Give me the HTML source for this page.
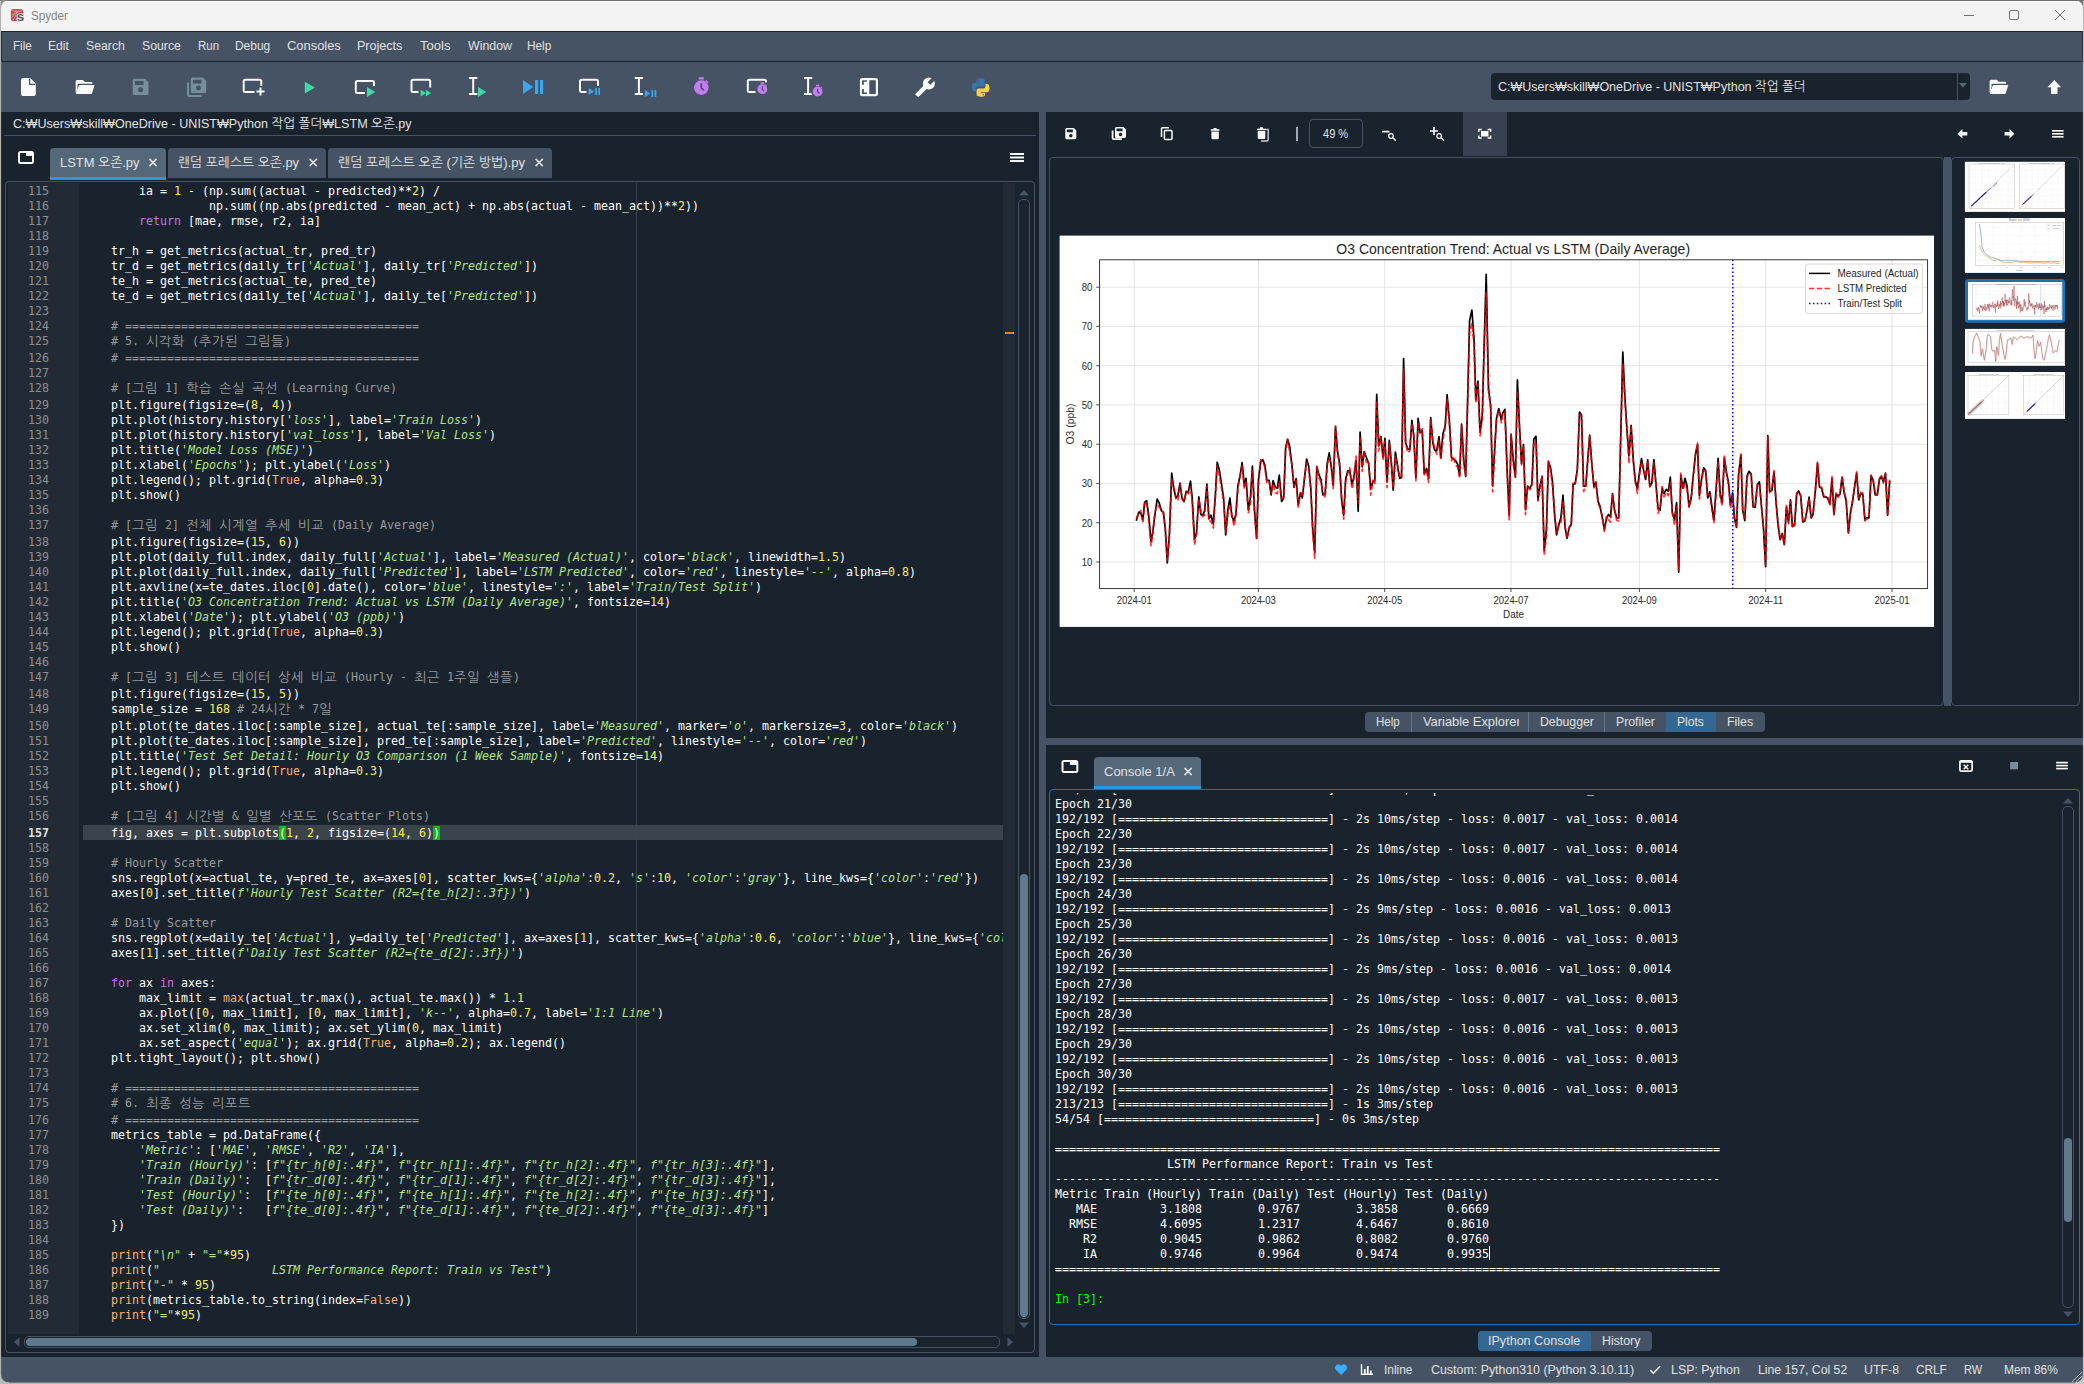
<!DOCTYPE html>
<html lang="ko"><head><meta charset="utf-8"><title>Spyder</title>
<style>
*{box-sizing:border-box;margin:0;padding:0}
html,body{width:2084px;height:1384px;overflow:hidden;background:#aeb0b3}
body{position:relative;font-family:"Liberation Sans","NanumGothic","Noto Sans CJK KR",sans-serif;font-size:13px;color:#e0e1e3}
.a{position:absolute}
.t{position:absolute;white-space:pre;line-height:1}
#top0{left:0;top:0;width:2084px;height:1px;background:#6d6d6d}
#win{left:0;top:0;width:2084px;height:1384px;background:#19232d;overflow:hidden}
#title{left:0;top:0;width:2084px;height:31px;background:#f3f3f3}
#menub{left:1px;top:31px;width:2082px;height:31px;background:#455364;border:1px solid #19232d}
#toolb{left:1px;top:62px;width:2082px;height:50px;background:#455364}
.m{position:absolute;top:38px;font-size:13px;line-height:15px;color:#e0e1e3;white-space:pre}
.ui{font-size:13px;color:#e0e1e3}
.mono{font-family:"DejaVu Sans Mono","Liberation Mono","NanumGothic",monospace;font-size:11.63px}
.ln,.cl{position:absolute;white-space:pre;height:15px;line-height:15px;font-family:"DejaVu Sans Mono","Liberation Mono","NanumGothic",monospace;font-size:11.63px;letter-spacing:0}
.ln{left:8px;width:41px;margin-top:0.2px;text-align:right;color:#8c8f92}
.cl{left:82px;color:#fff;margin-top:0.2px}
.cl i,.cl b{font-style:normal;font-weight:normal}
.cl .c{color:#999}
.cl .s{color:#b0e686;font-style:italic}
.cl .n{color:#faed5c}
.cl .kw{color:#c670e0}
.cl .bi{color:#fab16c}
.cl .mp{background:#0bbe0b}
.cl .k{font-family:"NanumGothic","Noto Sans CJK KR",sans-serif;font-size:13.3px;letter-spacing:0.5px;font-style:normal;display:inline-block;line-height:15px;vertical-align:top}
.co{position:absolute;left:1054px;margin-top:0.8px;white-space:pre;height:15px;line-height:15px;color:#fff;font-family:"DejaVu Sans Mono","Liberation Mono",monospace;font-size:11.63px}
svg{position:absolute;overflow:visible}
</style></head>
<body>
<div class="a" id="win">
<div class="a" id="title"></div>
<div class="t" style="left:30.9px;top:8px;font-size:13px;color:#868686;line-height:16px;transform-origin:0 0;transform:scaleX(0.8956);">Spyder</div>
<svg style="left:1950px;top:0" width="130" height="30" viewBox="1950 0 130 30"><g fill="none" stroke="#707070" stroke-width="1"><path d="M1964 15.5h10"/><rect x="2009.5" y="10.5" width="9" height="9" rx="1.5"/><path d="M2055 10l10 10M2065 10l-10 10"/></g></svg>
<div class="a" id="menub"></div>
<div class="t" style="left:12.7px;top:38px;font-size:13.4px;line-height:16px;color:#e0e1e3;transform-origin:0 0;transform:scaleX(0.8666);">File</div>
<div class="t" style="left:48.2px;top:38px;font-size:13.4px;line-height:16px;color:#e0e1e3;transform-origin:0 0;transform:scaleX(0.9056);">Edit</div>
<div class="t" style="left:85.6px;top:38px;font-size:13.4px;line-height:16px;color:#e0e1e3;transform-origin:0 0;transform:scaleX(0.9166);">Search</div>
<div class="t" style="left:141.5px;top:38px;font-size:13.4px;line-height:16px;color:#e0e1e3;transform-origin:0 0;transform:scaleX(0.9166);">Source</div>
<div class="t" style="left:197.5px;top:38px;font-size:13.4px;line-height:16px;color:#e0e1e3;transform-origin:0 0;transform:scaleX(0.8544);">Run</div>
<div class="t" style="left:235.4px;top:38px;font-size:13.4px;line-height:16px;color:#e0e1e3;transform-origin:0 0;transform:scaleX(0.8918);">Debug</div>
<div class="t" style="left:287.2px;top:38px;font-size:13.4px;line-height:16px;color:#e0e1e3;transform-origin:0 0;transform:scaleX(0.9637);">Consoles</div>
<div class="t" style="left:357.2px;top:38px;font-size:13.4px;line-height:16px;color:#e0e1e3;transform-origin:0 0;transform:scaleX(0.9364);">Projects</div>
<div class="t" style="left:420px;top:38px;font-size:13.4px;line-height:16px;color:#e0e1e3;transform-origin:0 0;transform:scaleX(0.9755);">Tools</div>
<div class="t" style="left:467.5px;top:38px;font-size:13.4px;line-height:16px;color:#e0e1e3;transform-origin:0 0;transform:scaleX(0.9236);">Window</div>
<div class="t" style="left:527.2px;top:38px;font-size:13.4px;line-height:16px;color:#e0e1e3;transform-origin:0 0;transform:scaleX(0.8821);">Help</div>
<div class="a" id="toolb"></div>
<div class="a" style="left:1491px;top:73px;width:479px;height:27px;background:#19232d;border-radius:4px"></div>
<div class="a" style="left:1957px;top:73px;width:1px;height:27px;background:#455364"></div>
<div class="t" style="left:1498px;top:78.5px;font-size:13.4px;line-height:16px;color:#e0e1e3;transform-origin:0 0;transform:scaleX(0.9337);">C:₩Users₩skill₩OneDrive - UNIST₩Python 작업 폴더</div>
<svg style="left:1959px;top:83px" width="8" height="5" viewBox="0 0 8 5"><path d="M0 0h8l-4 4.5z" fill="#54687a"/></svg>
<div class="a" style="left:1px;top:1357px;width:2082px;height:27px;background:#455364"></div>
<div class="t" style="left:1383.6px;top:1361.5px;font-size:13.4px;line-height:16px;color:#e0e1e3;transform-origin:0 0;transform:scaleX(0.8902);">Inline</div>
<div class="t" style="left:1430.5px;top:1361.5px;font-size:13.4px;line-height:16px;color:#e0e1e3;transform-origin:0 0;transform:scaleX(0.9264);">Custom: Python310 (Python 3.10.11)</div>
<div class="t" style="left:1671.3px;top:1361.5px;font-size:13.4px;line-height:16px;color:#e0e1e3;transform-origin:0 0;transform:scaleX(0.9254);">LSP: Python</div>
<div class="t" style="left:1758.2px;top:1361.5px;font-size:13.4px;line-height:16px;color:#e0e1e3;transform-origin:0 0;transform:scaleX(0.9146);">Line 157, Col 52</div>
<div class="t" style="left:1864.3px;top:1361.5px;font-size:13.4px;line-height:16px;color:#e0e1e3;transform-origin:0 0;transform:scaleX(0.9226);">UTF-8</div>
<div class="t" style="left:1916.3px;top:1361.5px;font-size:13.4px;line-height:16px;color:#e0e1e3;transform-origin:0 0;transform:scaleX(0.8808);">CRLF</div>
<div class="t" style="left:1964px;top:1361.5px;font-size:13.4px;line-height:16px;color:#e0e1e3;transform-origin:0 0;transform:scaleX(0.8153);">RW</div>
<div class="t" style="left:2003.5px;top:1361.5px;font-size:13.4px;line-height:16px;color:#e0e1e3;transform-origin:0 0;transform:scaleX(0.8925);">Mem 86%</div>
<div class="a" style="left:1039px;top:112px;width:7px;height:1245px;background:#455364"></div>
<div class="t" style="left:13px;top:115.5px;font-size:13.4px;line-height:16px;color:#e0e1e3;transform-origin:0 0;transform:scaleX(0.9389);">C:₩Users₩skill₩OneDrive - UNIST₩Python 작업 폴더₩LSTM 오존.py</div>
<div class="a" style="left:4px;top:135px;width:1032px;height:1px;background:#455364"></div>
<div class="a" style="left:50px;top:148px;width:116px;height:32px;background:#54687a;border-radius:4px 4px 0 0;border-bottom:3px solid #259ae9"></div>
<div class="a" style="left:168px;top:148px;width:158px;height:30px;background:#455364;border-radius:4px 4px 0 0"></div>
<div class="a" style="left:328px;top:148px;width:224px;height:30px;background:#455364;border-radius:4px 4px 0 0"></div>
<div class="t" style="left:60px;top:154.5px;font-size:13.4px;line-height:16px;color:#e0e1e3;transform-origin:0 0;transform:scaleX(0.9638);">LSTM 오존.py</div>
<div class="t" style="left:178px;top:154.5px;font-size:13.4px;line-height:16px;color:#e0e1e3;transform-origin:0 0;transform:scaleX(0.9602);">랜덤 포레스트 오존.py</div>
<div class="t" style="left:338px;top:154.5px;font-size:13.4px;line-height:16px;color:#e0e1e3;transform-origin:0 0;transform:scaleX(0.9703);">랜덤 포레스트 오존 (기존 방법).py</div>
<div class="a" style="left:5px;top:181px;width:1030px;height:1172px;border:1px solid #455364;border-radius:4px"></div>
<div class="a" style="left:8px;top:183px;width:71px;height:1151px;background:#222b35"></div>
<div class="a" style="left:1003px;top:183px;width:12px;height:1151px;background:#222b35"></div>
<div class="a" style="left:83px;top:825.3px;width:920px;height:14.7px;background:#3a424a"></div>
<div class="a" style="left:636px;top:183px;width:1px;height:1151px;background:#3a4552"></div>
<div class="a" style="left:1005px;top:332px;width:9px;height:2px;background:#e8841a"></div>
<div class="a" style="left:79px;top:183px;width:924px;height:1151px;overflow:hidden">
<div class="cl" style="left:4px;top:1px">        ia = <i class="n">1</i> - (np.sum((actual - predicted)**<i class="n">2</i>) /</div>
<div class="cl" style="left:4px;top:16px">                  np.sum((np.abs(predicted - mean_act) + np.abs(actual - mean_act))**<i class="n">2</i>))</div>
<div class="cl" style="left:4px;top:31px">        <i class="kw">return</i> [mae, rmse, r2, ia]</div>
<div class="cl" style="left:4px;top:61px">    tr_h = get_metrics(actual_tr, pred_tr)</div>
<div class="cl" style="left:4px;top:76px">    tr_d = get_metrics(daily_tr[<i class="s">'Actual'</i>], daily_tr[<i class="s">'Predicted'</i>])</div>
<div class="cl" style="left:4px;top:91px">    te_h = get_metrics(actual_te, pred_te)</div>
<div class="cl" style="left:4px;top:106px">    te_d = get_metrics(daily_te[<i class="s">'Actual'</i>], daily_te[<i class="s">'Predicted'</i>])</div>
<div class="cl" style="left:4px;top:136px">    <i class="c"># ==========================================</i></div>
<div class="cl" style="left:4px;top:151px">    <i class="c"># 5. <b class="k">시각화</b> (<b class="k">추가된</b> <b class="k">그림들</b>)</i></div>
<div class="cl" style="left:4px;top:168px">    <i class="c"># ==========================================</i></div>
<div class="cl" style="left:4px;top:198px">    <i class="c"># [<b class="k">그림</b> 1] <b class="k">학습</b> <b class="k">손실</b> <b class="k">곡선</b> (Learning Curve)</i></div>
<div class="cl" style="left:4px;top:215px">    plt.figure(figsize=(<i class="n">8</i>, <i class="n">4</i>))</div>
<div class="cl" style="left:4px;top:230px">    plt.plot(history.history[<i class="s">'loss'</i>], label=<i class="s">'Train Loss'</i>)</div>
<div class="cl" style="left:4px;top:245px">    plt.plot(history.history[<i class="s">'val_loss'</i>], label=<i class="s">'Val Loss'</i>)</div>
<div class="cl" style="left:4px;top:260px">    plt.title(<i class="s">'Model Loss (MSE)'</i>)</div>
<div class="cl" style="left:4px;top:275px">    plt.xlabel(<i class="s">'Epochs'</i>); plt.ylabel(<i class="s">'Loss'</i>)</div>
<div class="cl" style="left:4px;top:290px">    plt.legend(); plt.grid(<i class="bi">True</i>, alpha=<i class="n">0.3</i>)</div>
<div class="cl" style="left:4px;top:305px">    plt.show()</div>
<div class="cl" style="left:4px;top:335px">    <i class="c"># [<b class="k">그림</b> 2] <b class="k">전체</b> <b class="k">시계열</b> <b class="k">추세</b> <b class="k">비교</b> (Daily Average)</i></div>
<div class="cl" style="left:4px;top:352px">    plt.figure(figsize=(<i class="n">15</i>, <i class="n">6</i>))</div>
<div class="cl" style="left:4px;top:367px">    plt.plot(daily_full.index, daily_full[<i class="s">'Actual'</i>], label=<i class="s">'Measured (Actual)'</i>, color=<i class="s">'black'</i>, linewidth=<i class="n">1.5</i>)</div>
<div class="cl" style="left:4px;top:382px">    plt.plot(daily_full.index, daily_full[<i class="s">'Predicted'</i>], label=<i class="s">'LSTM Predicted'</i>, color=<i class="s">'red'</i>, linestyle=<i class="s">'--'</i>, alpha=<i class="n">0.8</i>)</div>
<div class="cl" style="left:4px;top:397px">    plt.axvline(x=te_dates.iloc[<i class="n">0</i>].date(), color=<i class="s">'blue'</i>, linestyle=<i class="s">':'</i>, label=<i class="s">'Train/Test Split'</i>)</div>
<div class="cl" style="left:4px;top:412px">    plt.title(<i class="s">'O3 Concentration Trend: Actual vs LSTM (Daily Average)'</i>, fontsize=<i class="n">14</i>)</div>
<div class="cl" style="left:4px;top:427px">    plt.xlabel(<i class="s">'Date'</i>); plt.ylabel(<i class="s">'O3 (ppb)'</i>)</div>
<div class="cl" style="left:4px;top:442px">    plt.legend(); plt.grid(<i class="bi">True</i>, alpha=<i class="n">0.3</i>)</div>
<div class="cl" style="left:4px;top:457px">    plt.show()</div>
<div class="cl" style="left:4px;top:487px">    <i class="c"># [<b class="k">그림</b> 3] <b class="k">테스트</b> <b class="k">데이터</b> <b class="k">상세</b> <b class="k">비교</b> (Hourly - <b class="k">최근</b> 1<b class="k">주일</b> <b class="k">샘플</b>)</i></div>
<div class="cl" style="left:4px;top:504px">    plt.figure(figsize=(<i class="n">15</i>, <i class="n">5</i>))</div>
<div class="cl" style="left:4px;top:519px">    sample_size = <i class="n">168</i> <i class="c"># 24<b class="k">시간</b> * 7<b class="k">일</b></i></div>
<div class="cl" style="left:4px;top:536px">    plt.plot(te_dates.iloc[:sample_size], actual_te[:sample_size], label=<i class="s">'Measured'</i>, marker=<i class="s">'o'</i>, markersize=<i class="n">3</i>, color=<i class="s">'black'</i>)</div>
<div class="cl" style="left:4px;top:551px">    plt.plot(te_dates.iloc[:sample_size], pred_te[:sample_size], label=<i class="s">'Predicted'</i>, linestyle=<i class="s">'--'</i>, color=<i class="s">'red'</i>)</div>
<div class="cl" style="left:4px;top:566px">    plt.title(<i class="s">'Test Set Detail: Hourly O3 Comparison (1 Week Sample)'</i>, fontsize=<i class="n">14</i>)</div>
<div class="cl" style="left:4px;top:581px">    plt.legend(); plt.grid(<i class="bi">True</i>, alpha=<i class="n">0.3</i>)</div>
<div class="cl" style="left:4px;top:596px">    plt.show()</div>
<div class="cl" style="left:4px;top:626px">    <i class="c"># [<b class="k">그림</b> 4] <b class="k">시간별</b> &amp; <b class="k">일별</b> <b class="k">산포도</b> (Scatter Plots)</i></div>
<div class="cl" style="left:4px;top:643px">    fig, axes = plt.subplots<i class="mp">(</i><i class="n">1</i>, <i class="n">2</i>, figsize=(<i class="n">14</i>, <i class="n">6</i>)<i class="mp">)</i></div>
<div class="cl" style="left:4px;top:673px">    <i class="c"># Hourly Scatter</i></div>
<div class="cl" style="left:4px;top:688px">    sns.regplot(x=actual_te, y=pred_te, ax=axes[<i class="n">0</i>], scatter_kws={<i class="s">'alpha'</i>:<i class="n">0.2</i>, <i class="s">'s'</i>:<i class="n">10</i>, <i class="s">'color'</i>:<i class="s">'gray'</i>}, line_kws={<i class="s">'color'</i>:<i class="s">'red'</i>})</div>
<div class="cl" style="left:4px;top:703px">    axes[<i class="n">0</i>].set_title(<i class="s">f'Hourly Test Scatter (R2={te_h[2]:.3f})'</i>)</div>
<div class="cl" style="left:4px;top:733px">    <i class="c"># Daily Scatter</i></div>
<div class="cl" style="left:4px;top:748px">    sns.regplot(x=daily_te[<i class="s">'Actual'</i>], y=daily_te[<i class="s">'Predicted'</i>], ax=axes[<i class="n">1</i>], scatter_kws={<i class="s">'alpha'</i>:<i class="n">0.6</i>, <i class="s">'color'</i>:<i class="s">'blue'</i>}, line_kws={<i class="s">'color'</i>:<i class="s">'red'</i>})</div>
<div class="cl" style="left:4px;top:763px">    axes[<i class="n">1</i>].set_title(<i class="s">f'Daily Test Scatter (R2={te_d[2]:.3f})'</i>)</div>
<div class="cl" style="left:4px;top:793px">    <i class="kw">for</i> ax <i class="kw">in</i> axes:</div>
<div class="cl" style="left:4px;top:808px">        max_limit = <i class="bi">max</i>(actual_tr.max(), actual_te.max()) * <i class="n">1.1</i></div>
<div class="cl" style="left:4px;top:823px">        ax.plot([<i class="n">0</i>, max_limit], [<i class="n">0</i>, max_limit], <i class="s">'k--'</i>, alpha=<i class="n">0.7</i>, label=<i class="s">'1:1 Line'</i>)</div>
<div class="cl" style="left:4px;top:838px">        ax.set_xlim(<i class="n">0</i>, max_limit); ax.set_ylim(<i class="n">0</i>, max_limit)</div>
<div class="cl" style="left:4px;top:853px">        ax.set_aspect(<i class="s">'equal'</i>); ax.grid(<i class="bi">True</i>, alpha=<i class="n">0.2</i>); ax.legend()</div>
<div class="cl" style="left:4px;top:868px">    plt.tight_layout(); plt.show()</div>
<div class="cl" style="left:4px;top:898px">    <i class="c"># ==========================================</i></div>
<div class="cl" style="left:4px;top:913px">    <i class="c"># 6. <b class="k">최종</b> <b class="k">성능</b> <b class="k">리포트</b></i></div>
<div class="cl" style="left:4px;top:930px">    <i class="c"># ==========================================</i></div>
<div class="cl" style="left:4px;top:945px">    metrics_table = pd.DataFrame({</div>
<div class="cl" style="left:4px;top:960px">        <i class="s">'Metric'</i>: [<i class="s">'MAE'</i>, <i class="s">'RMSE'</i>, <i class="s">'R2'</i>, <i class="s">'IA'</i>],</div>
<div class="cl" style="left:4px;top:975px">        <i class="s">'Train (Hourly)'</i>: [<i class="s">f"{tr_h[0]:.4f}"</i>, <i class="s">f"{tr_h[1]:.4f}"</i>, <i class="s">f"{tr_h[2]:.4f}"</i>, <i class="s">f"{tr_h[3]:.4f}"</i>],</div>
<div class="cl" style="left:4px;top:990px">        <i class="s">'Train (Daily)'</i>:  [<i class="s">f"{tr_d[0]:.4f}"</i>, <i class="s">f"{tr_d[1]:.4f}"</i>, <i class="s">f"{tr_d[2]:.4f}"</i>, <i class="s">f"{tr_d[3]:.4f}"</i>],</div>
<div class="cl" style="left:4px;top:1005px">        <i class="s">'Test (Hourly)'</i>:  [<i class="s">f"{te_h[0]:.4f}"</i>, <i class="s">f"{te_h[1]:.4f}"</i>, <i class="s">f"{te_h[2]:.4f}"</i>, <i class="s">f"{te_h[3]:.4f}"</i>],</div>
<div class="cl" style="left:4px;top:1020px">        <i class="s">'Test (Daily)'</i>:   [<i class="s">f"{te_d[0]:.4f}"</i>, <i class="s">f"{te_d[1]:.4f}"</i>, <i class="s">f"{te_d[2]:.4f}"</i>, <i class="s">f"{te_d[3]:.4f}"</i>]</div>
<div class="cl" style="left:4px;top:1035px">    })</div>
<div class="cl" style="left:4px;top:1065px">    <i class="bi">print</i>(<i class="s">"\n"</i> + <i class="s">"="</i>*<i class="n">95</i>)</div>
<div class="cl" style="left:4px;top:1080px">    <i class="bi">print</i>(<i class="s">"                LSTM Performance Report: Train vs Test"</i>)</div>
<div class="cl" style="left:4px;top:1095px">    <i class="bi">print</i>(<i class="s">"-"</i> * <i class="n">95</i>)</div>
<div class="cl" style="left:4px;top:1110px">    <i class="bi">print</i>(metrics_table.to_string(index=<i class="bi">False</i>))</div>
<div class="cl" style="left:4px;top:1125px">    <i class="bi">print</i>(<i class="s">"="</i>*<i class="n">95</i>)</div>
</div>
<div class="ln" style="top:184px">115</div>
<div class="ln" style="top:199px">116</div>
<div class="ln" style="top:214px">117</div>
<div class="ln" style="top:229px">118</div>
<div class="ln" style="top:244px">119</div>
<div class="ln" style="top:259px">120</div>
<div class="ln" style="top:274px">121</div>
<div class="ln" style="top:289px">122</div>
<div class="ln" style="top:304px">123</div>
<div class="ln" style="top:319px">124</div>
<div class="ln" style="top:334px">125</div>
<div class="ln" style="top:351px">126</div>
<div class="ln" style="top:366px">127</div>
<div class="ln" style="top:381px">128</div>
<div class="ln" style="top:398px">129</div>
<div class="ln" style="top:413px">130</div>
<div class="ln" style="top:428px">131</div>
<div class="ln" style="top:443px">132</div>
<div class="ln" style="top:458px">133</div>
<div class="ln" style="top:473px">134</div>
<div class="ln" style="top:488px">135</div>
<div class="ln" style="top:503px">136</div>
<div class="ln" style="top:518px">137</div>
<div class="ln" style="top:535px">138</div>
<div class="ln" style="top:550px">139</div>
<div class="ln" style="top:565px">140</div>
<div class="ln" style="top:580px">141</div>
<div class="ln" style="top:595px">142</div>
<div class="ln" style="top:610px">143</div>
<div class="ln" style="top:625px">144</div>
<div class="ln" style="top:640px">145</div>
<div class="ln" style="top:655px">146</div>
<div class="ln" style="top:670px">147</div>
<div class="ln" style="top:687px">148</div>
<div class="ln" style="top:702px">149</div>
<div class="ln" style="top:719px">150</div>
<div class="ln" style="top:734px">151</div>
<div class="ln" style="top:749px">152</div>
<div class="ln" style="top:764px">153</div>
<div class="ln" style="top:779px">154</div>
<div class="ln" style="top:794px">155</div>
<div class="ln" style="top:809px">156</div>
<div class="ln" style="top:826px;color:#e0e1e3;font-weight:bold">157</div>
<div class="ln" style="top:841px">158</div>
<div class="ln" style="top:856px">159</div>
<div class="ln" style="top:871px">160</div>
<div class="ln" style="top:886px">161</div>
<div class="ln" style="top:901px">162</div>
<div class="ln" style="top:916px">163</div>
<div class="ln" style="top:931px">164</div>
<div class="ln" style="top:946px">165</div>
<div class="ln" style="top:961px">166</div>
<div class="ln" style="top:976px">167</div>
<div class="ln" style="top:991px">168</div>
<div class="ln" style="top:1006px">169</div>
<div class="ln" style="top:1021px">170</div>
<div class="ln" style="top:1036px">171</div>
<div class="ln" style="top:1051px">172</div>
<div class="ln" style="top:1066px">173</div>
<div class="ln" style="top:1081px">174</div>
<div class="ln" style="top:1096px">175</div>
<div class="ln" style="top:1113px">176</div>
<div class="ln" style="top:1128px">177</div>
<div class="ln" style="top:1143px">178</div>
<div class="ln" style="top:1158px">179</div>
<div class="ln" style="top:1173px">180</div>
<div class="ln" style="top:1188px">181</div>
<div class="ln" style="top:1203px">182</div>
<div class="ln" style="top:1218px">183</div>
<div class="ln" style="top:1233px">184</div>
<div class="ln" style="top:1248px">185</div>
<div class="ln" style="top:1263px">186</div>
<div class="ln" style="top:1278px">187</div>
<div class="ln" style="top:1293px">188</div>
<div class="ln" style="top:1308px">189</div>
<svg style="left:1019px;top:189.5px" width="10" height="6" viewBox="0 0 10 6"><path d="M0 5.5L5 0l5 5.5z" fill="#455364"/></svg>
<div class="a" style="left:1018px;top:198.5px;width:12px;height:1120px;border:1px solid #455364;border-radius:5px"></div>
<div class="a" style="left:1019.6px;top:874px;width:8.8px;height:443px;background:#60798b;border-radius:4.4px"></div>
<svg style="left:1019px;top:1321.5px" width="10" height="6" viewBox="0 0 10 6"><path d="M0 0.5L5 6l5-5.5z" fill="#455364"/></svg>
<svg style="left:14.3px;top:1337px" width="6" height="10" viewBox="0 0 6 10"><path d="M5.5 0L0 5l5.5 5z" fill="#455364"/></svg>
<div class="a" style="left:24px;top:1336px;width:976px;height:12px;border:1px solid #455364;border-radius:5px"></div>
<div class="a" style="left:26px;top:1338px;width:891px;height:8px;background:#60798b;border-radius:4px"></div>
<svg style="left:1006.5px;top:1337.3px" width="6" height="10" viewBox="0 0 6 10"><path d="M0.5 0L6 5l-5.5 5z" fill="#455364"/></svg>
<div class="a" style="left:1463px;top:112px;width:44px;height:44px;background:#37414f"></div>
<div class="a" style="left:1309px;top:119px;width:54px;height:29px;border:1px solid #455364;border-radius:4px"></div>
<div class="t" style="left:1322.7px;top:125.5px;font-size:13.4px;line-height:16px;color:#e0e1e3;transform-origin:0 0;transform:scaleX(0.8254);">49 %</div>
<div class="a" style="left:1296px;top:127px;width:2px;height:14px;background:#9da9b5"></div>
<div class="a" style="left:1049px;top:156.5px;width:895px;height:549.5px;border:1px solid #455364;border-radius:4px"></div>
<div class="a" style="left:1944px;top:156.5px;width:7px;height:549.5px;background:#455364"></div>
<div class="a" style="left:1951px;top:156.5px;width:129px;height:549.5px;border:1px solid #455364;border-radius:4px"></div>
<div class="a" style="left:1365px;top:712px;width:400px;height:20px;background:#455364;border-radius:4px"></div>
<div class="a" style="left:1666px;top:712px;width:50px;height:20px;background:#346792"></div>
<div class="a" style="left:1411px;top:712px;width:1px;height:20px;background:#60798b"></div>
<div class="a" style="left:1528px;top:712px;width:1px;height:20px;background:#60798b"></div>
<div class="a" style="left:1604px;top:712px;width:1px;height:20px;background:#60798b"></div>
<div class="t" style="left:1376.4px;top:713.5px;font-size:13.4px;line-height:16px;color:#e0e1e3;transform-origin:0 0;transform:scaleX(0.8567);">Help</div>
<div class="a" style="left:1420px;top:712px;width:98.6px;height:20px;overflow:hidden"><div class="t" style="left:2.7999999999999545px;top:1.5px;font-size:13.4px;line-height:16px;color:#e0e1e3;transform-origin:0 0;transform:scaleX(0.9605);">Variable Explorer</div></div>
<div class="t" style="left:1540.4px;top:713.5px;font-size:13.4px;line-height:16px;color:#e0e1e3;transform-origin:0 0;transform:scaleX(0.9162);">Debugger</div>
<div class="t" style="left:1616.4px;top:713.5px;font-size:13.4px;line-height:16px;color:#e0e1e3;transform-origin:0 0;transform:scaleX(0.9146);">Profiler</div>
<div class="t" style="left:1677.3px;top:713.5px;font-size:13.4px;line-height:16px;color:#e0e1e3;transform-origin:0 0;transform:scaleX(0.9033);">Plots</div>
<div class="t" style="left:1727.4px;top:713.5px;font-size:13.4px;line-height:16px;color:#e0e1e3;transform-origin:0 0;transform:scaleX(0.9229);">Files</div>
<div class="a" style="left:1046px;top:738px;width:1037px;height:7px;background:#455364"></div>
<div class="a" style="left:1094px;top:757px;width:107px;height:32px;background:#54687a;border-radius:4px 4px 0 0;border-bottom:3px solid #259ae9"></div>
<div class="t" style="left:1104.2px;top:763.5px;font-size:13.4px;line-height:16px;color:#e0e1e3;transform-origin:0 0;transform:scaleX(0.9705);">Console 1/A</div>
<div class="a" style="left:1049px;top:789px;width:1031px;height:536px;border:1px solid #1a72bb;border-radius:4px"></div>
<div class="a" style="left:1050px;top:792.5px;width:1010px;height:531px;overflow:hidden">
<div class="co" style="left:5px;top:-11.5px">192/192 [==============================] - 2s 10ms/step - loss: 0.0017 - val_loss: 0.0014</div>
<div class="co" style="left:5px;top:3.5px">Epoch 21/30</div>
<div class="co" style="left:5px;top:18.5px">192/192 [==============================] - 2s 10ms/step - loss: 0.0017 - val_loss: 0.0014</div>
<div class="co" style="left:5px;top:33.5px">Epoch 22/30</div>
<div class="co" style="left:5px;top:48.5px">192/192 [==============================] - 2s 10ms/step - loss: 0.0017 - val_loss: 0.0014</div>
<div class="co" style="left:5px;top:63.5px">Epoch 23/30</div>
<div class="co" style="left:5px;top:78.5px">192/192 [==============================] - 2s 10ms/step - loss: 0.0016 - val_loss: 0.0014</div>
<div class="co" style="left:5px;top:93.5px">Epoch 24/30</div>
<div class="co" style="left:5px;top:108.5px">192/192 [==============================] - 2s 9ms/step - loss: 0.0016 - val_loss: 0.0013</div>
<div class="co" style="left:5px;top:123.5px">Epoch 25/30</div>
<div class="co" style="left:5px;top:138.5px">192/192 [==============================] - 2s 10ms/step - loss: 0.0016 - val_loss: 0.0013</div>
<div class="co" style="left:5px;top:153.5px">Epoch 26/30</div>
<div class="co" style="left:5px;top:168.5px">192/192 [==============================] - 2s 9ms/step - loss: 0.0016 - val_loss: 0.0014</div>
<div class="co" style="left:5px;top:183.5px">Epoch 27/30</div>
<div class="co" style="left:5px;top:198.5px">192/192 [==============================] - 2s 10ms/step - loss: 0.0017 - val_loss: 0.0013</div>
<div class="co" style="left:5px;top:213.5px">Epoch 28/30</div>
<div class="co" style="left:5px;top:228.5px">192/192 [==============================] - 2s 10ms/step - loss: 0.0016 - val_loss: 0.0013</div>
<div class="co" style="left:5px;top:243.5px">Epoch 29/30</div>
<div class="co" style="left:5px;top:258.5px">192/192 [==============================] - 2s 10ms/step - loss: 0.0016 - val_loss: 0.0013</div>
<div class="co" style="left:5px;top:273.5px">Epoch 30/30</div>
<div class="co" style="left:5px;top:288.5px">192/192 [==============================] - 2s 10ms/step - loss: 0.0016 - val_loss: 0.0013</div>
<div class="co" style="left:5px;top:303.5px">213/213 [==============================] - 1s 3ms/step</div>
<div class="co" style="left:5px;top:318.5px">54/54 [==============================] - 0s 3ms/step</div>
<div class="co" style="left:5px;top:348.5px">===============================================================================================</div>
<div class="co" style="left:5px;top:363.5px">                LSTM Performance Report: Train vs Test</div>
<div class="co" style="left:5px;top:378.5px">-----------------------------------------------------------------------------------------------</div>
<div class="co" style="left:5px;top:393.5px">Metric Train (Hourly) Train (Daily) Test (Hourly) Test (Daily)</div>
<div class="co" style="left:5px;top:408.5px">   MAE         3.1808        0.9767        3.3858       0.6669</div>
<div class="co" style="left:5px;top:423.5px">  RMSE         4.6095        1.2317        4.6467       0.8610</div>
<div class="co" style="left:5px;top:438.5px">    R2         0.9045        0.9862        0.8082       0.9760</div>
<div class="co" style="left:5px;top:453.5px">    IA         0.9746        0.9964        0.9474       0.9935</div>
<div class="co" style="left:5px;top:468.5px">===============================================================================================</div>
<div class="co" style="left:5px;top:498.5px;color:#00ff00">In [3]:</div>
</div>
<div class="a" style="left:1489px;top:1246px;width:1px;height:14px;background:#fff"></div>
<svg style="left:2063px;top:797.5px" width="10" height="6" viewBox="0 0 10 6"><path d="M0 5.5L5 0l5 5.5z" fill="#455364"/></svg>
<div class="a" style="left:2062px;top:806px;width:12px;height:502px;border:1px solid #455364;border-radius:5px"></div>
<div class="a" style="left:2064px;top:1138px;width:8px;height:84px;background:#60798b;border-radius:4px"></div>
<svg style="left:2063px;top:1311px" width="10" height="6" viewBox="0 0 10 6"><path d="M0 0.5L5 6l5-5.5z" fill="#455364"/></svg>
<div class="a" style="left:1478px;top:1331px;width:174px;height:20px;background:#455364;border-radius:4px"></div>
<div class="a" style="left:1478px;top:1331px;width:113px;height:20px;background:#346792;border-radius:4px 0 0 4px"></div>
<div class="t" style="left:1488.1px;top:1332.5px;font-size:13.4px;line-height:16px;color:#e0e1e3;transform-origin:0 0;transform:scaleX(0.9383);">IPython Console</div>
<div class="t" style="left:1602.1px;top:1332.5px;font-size:13.4px;line-height:16px;color:#e0e1e3;transform-origin:0 0;transform:scaleX(0.9215);">History</div>
<svg style="left:0;top:0;pointer-events:none" width="2084" height="1384" viewBox="0 0 2084 1384">
<rect x="9.5" y="7.5" width="15" height="15" rx="3" fill="#fbfbfb"/>
<rect x="10.8" y="8.9" width="12.4" height="12.3" rx="2.6" fill="#c44a4a"/>
<path d="M11.5 10.5l6 1.5 5-1.5M12 15l5.5-3M13 20.5l4.5-8.5M11.5 17.5l3-3.5M15 9.5l2.500 2.5M20 9.500l-2.500 2.500" stroke="#e9b3b3" stroke-width="0.7" fill="none"/>
<rect x="16.8" y="13.2" width="7" height="8.4" fill="#f3f3f3" opacity="0.0"/>
<text x="16.800" y="20.900" font-family="Liberation Sans,sans-serif" font-weight="bold" font-size="13.500" fill="#555" stroke="#f3f3f3" stroke-width="1.6" paint-order="stroke">s</text>
<path fill="#fafafa" d="M23 78h7.200l5.600 5.600V94a2 2 0 0 1-2 2H23a2 2 0 0 1-2-2V80a2 2 0 0 1 2-2z"/><path d="M29.600 78.600v5.700h5.700" stroke="#455364" stroke-width="1.300" fill="none"/>
<path fill="#fafafa" d="M75.65 81.60Q75.65 79.90 77.17 79.90L82.91 79.90L84.94 81.89L91.19 81.89Q92.40 81.89 92.40 82.88L92.40 83.81L78.87 83.81Q77.55 83.81 77.55 84.87L77.55 87.00L76.79 91.26L75.65 93.11z"/><path fill="#fafafa" d="M79.82 85.01L94.60 85.01L91.98 93.39Q91.80 94.10 90.81 94.10L76.60 94.10Q75.65 94.10 76.03 93.11L78.68 85.86Q78.97 85.01 79.82 85.01z"/>
<path fill-rule="evenodd" fill="#788d9c" d="M134.2 78.8H145.024L148.5 82.276V93.5a1.5 1.5 0 0 1-1.5 1.5H134.2a1.5 1.5 0 0 1-1.5-1.5V80.3a1.5 1.5 0 0 1 1.5-1.5zM134.91 81.07v3.89h8.69v-3.89z"/><circle cx="140.60" cy="89.82" r="2.53" fill="#455364"/>
<path d="M188 82.500V94.500a1.500 1.500 0 0 0 1.500 1.500H201.500" stroke="#788d9c" stroke-width="2" fill="none"/>
<path fill-rule="evenodd" fill="#788d9c" d="M192.3 77.6H202.81199999999998L206.2 80.98799999999999V91.5a1.5 1.5 0 0 1-1.5 1.5H192.3a1.5 1.5 0 0 1-1.5-1.5V79.1a1.5 1.5 0 0 1 1.5-1.5zM192.96 79.76v3.70h8.47v-3.70z"/><circle cx="198.50" cy="88.07" r="2.46" fill="#455364"/>
<path d="M254.5 92H245.2a1.5 1.5 0 0 1-1.5-1.5V81.3a1.5 1.5 0 0 1 1.5-1.5H259.8a1.5 1.5 0 0 1 1.5 1.5V86" stroke="#fafafa" stroke-width="2" fill="none"/>
<path d="M260.500 87.500v8M256.500 91.500h8" stroke="#fafafa" stroke-width="2"/>
<path d="M304.8 81.8L315 87.6L304.8 93.4z" fill="#3fd9a6"/>
<path d="M365 93H357.3a1.5 1.5 0 0 1-1.5-1.5V82.5a1.5 1.5 0 0 1 1.5-1.5H372.5a1.5 1.5 0 0 1 1.5 1.5V86" stroke="#fafafa" stroke-width="2" fill="none"/>
<path d="M367 87L375.3 92.0L367 97z" fill="#3fd9a6"/>
<path d="M418.5 92H413.0a1.5 1.5 0 0 1-1.5-1.5V81.3a1.5 1.5 0 0 1 1.5-1.5H428.7a1.5 1.5 0 0 1 1.5 1.5V87.5" stroke="#fafafa" stroke-width="2" fill="none"/>
<path d="M420.6 89.7L426 93.05000000000001L420.6 96.4z" fill="#3fd9a6"/>
<path d="M425.8 89.7L431.2 93.05000000000001L425.8 96.4z" fill="#3fd9a6"/>
<path d="M469 78H477.4M469 94H477.4M473.2 78V94" stroke="#fafafa" stroke-width="2" fill="none"/>
<path d="M478 87L486.2 92.0L478 97z" fill="#3fd9a6"/>
<path d="M523 80L533.2 87.0L523 94z" fill="#36a7f3"/>
<rect x="535" y="80" width="3.200" height="14" fill="#36a7f3"/><rect x="540" y="80" width="3.200" height="14" fill="#36a7f3"/>
<path d="M586.5 92H581.5a1.5 1.5 0 0 1-1.5-1.5V81.3a1.5 1.5 0 0 1 1.5-1.5H596.5a1.5 1.5 0 0 1 1.5 1.5V86" stroke="#fafafa" stroke-width="2" fill="none"/>
<path d="M588.6 88L594.072 91.5L588.6 95z" fill="#36a7f3"/><rect x="595.21" y="88" width="1.71" height="7" fill="#36a7f3"/><rect x="598.29" y="88" width="1.71" height="7" fill="#36a7f3"/>
<path d="M634.8 78H643M634.8 94H643M638.9 78V94" stroke="#fafafa" stroke-width="2" fill="none"/>
<path d="M644.8 90L650.3199999999999 93.5L644.8 97z" fill="#36a7f3"/><rect x="651.47" y="90" width="1.72" height="7" fill="#36a7f3"/><rect x="654.57" y="90" width="1.72" height="7" fill="#36a7f3"/>
<circle cx="701.3" cy="87.6" r="7.3" fill="#c57cf2"/><rect x="698.75" y="77.23" width="5.11" height="2.21" fill="#c57cf2"/><path d="M705.83 80.66l2.19 2.19" stroke="#c57cf2" stroke-width="1.61"/><path d="M701.3 83.22V87.80L704.07 90.37" stroke="#455364" stroke-width="1.75" fill="none"/>
<path d="M755.5 92H749.3a1.5 1.5 0 0 1-1.5-1.5V81.3a1.5 1.5 0 0 1 1.5-1.5H764.5a1.5 1.5 0 0 1 1.5 1.5V82.5" stroke="#fafafa" stroke-width="2" fill="none"/>
<circle cx="762.3" cy="88.7" r="6.6000000000000005" fill="#455364"/><circle cx="762.3" cy="89.2" r="4.9" fill="#c57cf2"/><rect x="760.58" y="82.24" width="3.43" height="1.68" fill="#c57cf2"/><path d="M765.34 84.55l1.47 1.47" stroke="#c57cf2" stroke-width="1.08"/><path d="M762.3 86.26V89.40L764.16 91.06" stroke="#455364" stroke-width="1.18" fill="none"/>
<path d="M804 78H812.2M804 94H812.2M808.1 78V94" stroke="#fafafa" stroke-width="2" fill="none"/>
<circle cx="817.6" cy="91.1" r="6.6000000000000005" fill="#455364"/><circle cx="817.6" cy="91.6" r="4.9" fill="#c57cf2"/><rect x="815.88" y="84.64" width="3.43" height="1.68" fill="#c57cf2"/><path d="M820.64 86.94l1.47 1.47" stroke="#c57cf2" stroke-width="1.08"/><path d="M817.6 88.66V91.80L819.46 93.46" stroke="#455364" stroke-width="1.18" fill="none"/>
<rect x="859.900" y="77.900" width="18.100" height="18.300" rx="2.200" fill="#fafafa"/><path fill="#455364" d="M869.300 80.300h6.500v13.600h-6.500zM862.100 80.300h4.800v1.500h-3v3h-1.800zM862.100 93.900h4.800v-1.500h-3v-3.400h-1.800z"/>
<g transform="translate(928.900 83.500) rotate(-45)"><circle r="6" fill="#fafafa"/><rect x="-17.300" y="-2.250" width="14" height="4.500" fill="#fafafa"/><rect x="0" y="-1.850" width="8" height="3.700" fill="#455364"/></g>
<path fill="#3776ab" d="M980.500 78.300c-4.400 0-4.100 1.900-4.100 1.900v2h4.200v.600h-5.900s-2.800-.300-2.800 4.100 2.500 4.300 2.500 4.300h1.500v-2.100s-.100-2.500 2.400-2.500h4.200s2.300 0 2.300-2.300v-3.800s.400-2.200-4.300-2.200zm-2.300 1.300a.750.750 0 1 1 0 1.500.750.750 0 0 1 0-1.500z"/>
<path fill="#ffd43b" d="M980.900 96.800c4.400 0 4.100-1.900 4.100-1.900v-2h-4.200v-.600h5.900s2.800.300 2.800-4.100-2.500-4.300-2.500-4.300h-1.500v2.100s.100 2.500-2.400 2.500h-4.200s-2.300 0-2.300 2.300v3.800s-.400 2.200 4.300 2.200zm2.300-1.300a.750.750 0 1 1 0-1.500.750.750 0 0 1 0 1.500z"/>
<path fill="#fafafa" d="M1989.60 81.50Q1989.60 79.80 1991.10 79.80L1996.76 79.80L1998.76 81.79L2004.93 81.79Q2006.13 81.79 2006.13 82.78L2006.13 83.70L1992.78 83.70Q1991.47 83.70 1991.47 84.77L1991.47 86.90L1990.72 91.16L1989.60 93.01z"/><path fill="#fafafa" d="M1993.71 84.91L2008.30 84.91L2005.72 93.29Q2005.53 94.00 2004.56 94.00L1990.53 94.00Q1989.60 94.00 1989.97 93.01L1992.59 85.76Q1992.87 84.91 1993.71 84.91z"/>
<path fill="#fafafa" d="M2054.300 80l6.800 7.200h-3.600V94h-6.400v-6.800h-3.600z"/>
<rect x="19" y="152" width="14" height="11" rx="1.5" fill="none" stroke="#fafafa" stroke-width="2"/><rect x="26.00" y="152" width="7.00" height="3.90" fill="#fafafa"/>
<rect x="1010" y="153.00" width="14" height="1.96" fill="#fafafa"/><rect x="1010" y="156.52" width="14" height="1.96" fill="#fafafa"/><rect x="1010" y="160.04" width="14" height="1.96" fill="#fafafa"/>
<path d="M149.4 158.9L156.6 166.1M156.6 158.9L149.4 166.1" stroke="#e0e1e3" stroke-width="1.5" fill="none"/>
<path d="M309.59999999999997 158.9L316.8 166.1M316.8 158.9L309.59999999999997 166.1" stroke="#e0e1e3" stroke-width="1.5" fill="none"/>
<path d="M535.6 158.9L542.8000000000001 166.1M542.8000000000001 158.9L535.6 166.1" stroke="#e0e1e3" stroke-width="1.5" fill="none"/>
<path fill-rule="evenodd" fill="#fafafa" d="M1066.8 128H1073.8799999999999L1076.3 130.42V137.8a1.5 1.5 0 0 1-1.5 1.5H1066.8a1.5 1.5 0 0 1-1.5-1.5V129.5a1.5 1.5 0 0 1 1.5-1.5zM1066.84 129.58v2.71h6.05v-2.71z"/><circle cx="1070.80" cy="135.68" r="1.76" fill="#19232d"/>
<path d="M1112.600 130.500V138a1.200 1.200 0 0 0 1.200 1.200H1122" stroke="#fafafa" stroke-width="1.800" fill="none"/>
<path fill-rule="evenodd" fill="#fafafa" d="M1116.5 127H1123.58L1126 129.42V136.5a1.5 1.5 0 0 1-1.5 1.5H1116.5a1.5 1.5 0 0 1-1.5-1.5V128.5a1.5 1.5 0 0 1 1.5-1.5zM1116.54 128.54v2.64h6.05v-2.64z"/><circle cx="1120.50" cy="134.48" r="1.76" fill="#19232d"/>
<rect x="1164.400" y="130.400" width="7.600" height="9" rx="1" fill="none" stroke="#fafafa" stroke-width="1.500"/><path d="M1161.500 137V128.700a1 1 0 0 1 1-1H1169" stroke="#fafafa" stroke-width="1.500" fill="none"/>
<path fill="#fafafa" d="M1210.7 129.36h2.46l0.70-1.36h2.46l0.70 1.36H1219.5v1.36H1210.7zM1211.40 131.39H1218.80V138.10000000000002a1.2 1.2 0 0 1-1.2 1.2H1212.60a1.2 1.2 0 0 1-1.2-1.2z"/>
<path d="M1266 129.500h2.200V139.500a1.500 1.500 0 0 1-1.500 1.500H1261" stroke="#c9cdd0" stroke-width="1.400" fill="none"/>
<path fill="#fafafa" d="M1257 128.70h2.52l0.72-1.40h2.52l0.72 1.40H1266v1.40H1257zM1257.72 130.81H1265.28V137.8a1.2 1.2 0 0 1-1.2 1.2H1258.92a1.2 1.2 0 0 1-1.2-1.2z"/>
<path d="M1382 131.600h7.500" stroke="#fafafa" stroke-width="1.700"/><circle cx="1391" cy="136" r="2.300" fill="none" stroke="#fafafa" stroke-width="1.200"/><path d="M1392.800 137.800l3 3" stroke="#fafafa" stroke-width="1.400"/>
<path d="M1430 131h8M1434 127v8" stroke="#fafafa" stroke-width="1.700"/><circle cx="1439.200" cy="136" r="2.300" fill="none" stroke="#fafafa" stroke-width="1.200"/><path d="M1441 137.800l3 3" stroke="#fafafa" stroke-width="1.400"/>
<rect x="1481" y="131" width="7.500" height="5.500" fill="#fafafa"/><path d="M1478.800 132v-2.500h3M1487.600 129.500h3v2.500M1490.600 135.500v2.500h-3M1481.800 138h-3v-2.500" stroke="#fafafa" stroke-width="1.500" fill="none"/>
<path fill="#fafafa" d="M1957.400 133.700l5-4.700v3h4.900v3.400h-4.900v3z"/>
<path fill="#fafafa" d="M2014.500 133.700l-5-4.700v3h-4.900v3.400h4.900v3z"/>
<rect x="2052" y="130.00" width="11.599999999999909" height="1.65" fill="#fafafa"/><rect x="2052" y="132.97" width="11.599999999999909" height="1.65" fill="#fafafa"/><rect x="2052" y="135.95" width="11.599999999999909" height="1.65" fill="#fafafa"/>
<rect x="1062.5" y="761" width="14.799999999999955" height="11" rx="1.5" fill="none" stroke="#fafafa" stroke-width="2"/><rect x="1069.90" y="761" width="7.40" height="3.90" fill="#fafafa"/>
<path d="M1184.5 767.9L1191.6999999999998 775.1M1191.6999999999998 767.9L1184.5 775.1" stroke="#e0e1e3" stroke-width="1.5" fill="none"/>
<rect x="1959.900" y="760.800" width="12.200" height="10.400" rx="1.500" fill="none" stroke="#fafafa" stroke-width="1.700"/><path d="M1959.500 761.800h13" stroke="#fafafa" stroke-width="2"/>
<path d="M1963.7 764.7L1968.3 769.3M1968.3 764.7L1963.7 769.3" stroke="#fafafa" stroke-width="1.5" fill="none"/>
<rect x="2010.100" y="762" width="7.900" height="7.300" fill="#788d9c"/>
<rect x="2056.1" y="761.80" width="11.800000000000182" height="1.65" fill="#fafafa"/><rect x="2056.1" y="764.77" width="11.800000000000182" height="1.65" fill="#fafafa"/><rect x="2056.1" y="767.75" width="11.800000000000182" height="1.65" fill="#fafafa"/>
<path fill="#38aefc" d="M1341.100 1375.100l-5-5a3.300 3.300 0 0 1 4.700-4.700l.3.300.3-.3a3.300 3.300 0 0 1 4.700 4.700z"/>
<path d="M1361.500 1364v10.300h11.500" stroke="#fafafa" stroke-width="1.400" fill="none"/><path d="M1364.800 1374v-5M1367.800 1374v-8M1370.800 1374v-3.500" stroke="#fafafa" stroke-width="1.800"/>
<path d="M1650.300 1370.300l3 3 6.800-7" stroke="#fafafa" stroke-width="1.500" fill="none"/>
<path d="M2082 1372l-10 10M2082 1376l-6 6" stroke="#c5c9cd" stroke-width="0.900"/>
</svg>
<svg style="left:0;top:0" width="2084" height="1384" viewBox="0 0 2084 1384">
<rect x="1059.6" y="235.6" width="874.4" height="391.3" fill="#fff"/>
<path d="M1134.2 259.8V588.6M1258.4 259.8V588.6M1384.7 259.8V588.6M1511.0 259.8V588.6M1639.4 259.8V588.6M1765.7 259.8V588.6M1892.0 259.8V588.6M1099.6 562.0H1927.6M1099.6 522.7H1927.6M1099.6 483.4H1927.6M1099.6 444.2H1927.6M1099.6 404.9H1927.6M1099.6 365.7H1927.6M1099.6 326.4H1927.6M1099.6 287.2H1927.6" stroke="#e4e4e4" stroke-width="1" fill="none"/>
<polyline points="1136.3,520.7 1138.8,512.1 1140.8,513.3 1142.9,519.6 1144.6,502.3 1146.6,500.7 1148.7,515.2 1151.0,541.5 1152.8,532.1 1154.9,514.8 1157.2,499.1 1159.0,502.3 1161.5,510.9 1163.4,512.1 1165.3,528.6 1167.3,562.9 1169.4,534.5 1171.7,473.2 1173.7,488.2 1176.0,498.0 1177.9,495.6 1180.0,483.1 1182.0,498.0 1184.1,501.5 1186.2,491.3 1188.2,492.5 1190.5,481.1 1192.2,498.0 1194.5,539.2 1196.5,532.9 1198.8,496.8 1200.9,514.5 1202.7,515.6 1204.6,510.9 1206.9,484.2 1208.9,518.8 1211.0,515.2 1213.3,523.9 1215.4,494.2 1217.2,462.3 1219.3,469.7 1221.4,483.4 1223.6,498.0 1225.7,534.9 1227.8,510.1 1229.9,498.0 1231.9,516.4 1234.0,521.1 1235.9,513.9 1237.9,485.8 1240.0,476.0 1242.1,462.6 1244.4,485.8 1246.0,478.3 1248.3,509.7 1250.4,498.0 1252.4,466.2 1254.5,510.1 1256.6,538.4 1258.4,480.7 1260.6,462.3 1262.8,459.7 1264.8,464.8 1266.9,480.3 1269.2,480.3 1271.1,494.8 1273.1,480.7 1275.2,487.0 1277.3,488.2 1279.3,475.2 1281.6,501.5 1283.7,498.0 1285.6,448.1 1287.6,439.3 1289.7,446.6 1292.0,465.8 1294.0,487.4 1296.1,478.7 1298.2,505.0 1300.5,492.9 1302.3,498.0 1304.5,478.3 1306.6,459.1 1308.7,466.2 1310.8,488.2 1312.7,528.6 1314.7,552.5 1316.8,466.6 1318.9,474.6 1321.0,479.5 1322.8,494.8 1325.1,494.2 1327.2,463.4 1329.2,452.8 1331.3,466.6 1333.2,485.4 1335.5,426.9 1337.5,451.3 1339.6,463.4 1341.7,500.3 1343.7,515.2 1345.6,479.5 1347.7,470.9 1349.7,470.5 1352.0,484.4 1353.9,477.2 1356.0,460.7 1358.2,511.3 1360.1,432.0 1362.2,467.0 1364.2,451.7 1366.4,457.5 1368.6,463.4 1370.7,488.2 1372.9,481.9 1374.8,480.3 1376.7,394.4 1378.7,445.8 1380.9,436.7 1383.1,457.5 1384.9,438.3 1387.0,481.9 1389.3,440.3 1391.4,463.4 1393.2,490.1 1395.4,452.0 1397.6,466.2 1399.6,478.3 1401.5,477.6 1403.6,358.6 1405.6,442.6 1407.7,448.9 1409.8,449.7 1411.9,420.3 1413.7,435.4 1415.9,477.6 1418.1,418.3 1420.1,432.8 1422.2,430.5 1424.3,474.0 1426.6,468.5 1428.6,478.3 1430.7,417.5 1432.8,442.6 1434.6,450.1 1436.7,450.9 1439.0,436.7 1440.8,457.9 1442.9,434.0 1445.2,426.1 1447.1,394.7 1449.3,419.5 1451.5,457.5 1453.5,459.1 1455.7,460.7 1457.8,464.6 1459.6,475.6 1461.6,424.2 1463.8,461.1 1465.7,476.4 1467.6,401.0 1469.6,320.6 1471.9,310.0 1474.0,338.6 1475.8,399.8 1477.9,381.0 1480.1,432.4 1482.3,415.7 1484.1,346.1 1486.2,274.4 1488.5,388.9 1490.6,404.6 1492.6,485.8 1494.5,452.0 1496.5,418.3 1498.8,408.5 1501.3,419.5 1502.7,413.2 1504.9,409.3 1507.1,468.5 1509.2,515.2 1511.1,434.4 1513.2,458.7 1515.4,477.2 1517.4,379.8 1519.4,424.2 1521.5,463.4 1523.5,444.6 1525.5,509.7 1527.6,486.2 1529.9,488.7 1531.9,483.8 1533.8,439.1 1536.0,436.4 1537.9,500.3 1540.0,485.8 1542.1,476.8 1544.2,550.6 1546.4,529.8 1548.4,461.9 1550.5,467.4 1552.5,481.9 1554.7,516.4 1556.6,534.9 1558.7,525.1 1560.9,517.6 1563.0,495.2 1565.1,527.4 1567.0,538.4 1569.2,527.8 1571.3,524.3 1573.1,484.4 1575.2,483.8 1577.3,469.7 1579.5,412.0 1581.5,415.2 1583.6,486.2 1585.8,486.2 1587.6,461.1 1589.7,435.2 1591.9,464.8 1594.0,487.0 1595.9,482.3 1598.0,501.1 1600.1,506.6 1602.3,517.6 1604.4,529.8 1606.4,518.8 1608.4,514.5 1610.5,516.8 1612.5,493.7 1614.6,510.5 1616.6,517.6 1618.7,518.0 1620.8,434.0 1622.8,352.0 1624.9,397.1 1627.0,430.5 1629.0,456.0 1631.1,425.4 1633.4,461.1 1635.3,480.7 1637.3,488.2 1639.4,473.2 1641.5,458.7 1643.5,469.7 1645.6,479.5 1647.7,459.9 1649.8,486.2 1651.8,483.4 1653.9,459.5 1656.0,484.4 1658.0,507.8 1660.1,510.1 1662.2,488.2 1664.0,493.7 1666.3,489.3 1668.4,491.3 1670.3,477.2 1672.3,512.5 1674.5,519.6 1676.6,502.7 1678.7,572.2 1680.8,475.2 1682.9,488.2 1685.0,478.3 1687.0,485.8 1689.1,506.6 1691.2,498.0 1693.2,476.0 1695.4,455.0 1697.5,444.6 1699.4,495.6 1701.5,479.5 1703.6,467.8 1705.7,470.5 1707.7,498.0 1709.8,491.7 1711.9,506.6 1713.9,520.0 1716.0,490.5 1718.1,458.3 1720.2,494.2 1722.2,502.7 1724.3,457.9 1726.4,472.1 1728.4,481.9 1730.5,504.6 1732.6,492.9 1734.4,517.6 1736.5,527.4 1738.6,474.6 1740.9,454.8 1742.7,510.1 1744.8,520.7 1747.0,476.0 1749.0,471.3 1751.2,474.0 1753.1,507.0 1755.1,507.4 1757.4,484.4 1759.4,481.9 1761.5,506.6 1763.5,528.6 1765.6,566.7 1767.8,435.6 1769.6,491.3 1771.9,490.5 1774.0,472.1 1776.2,504.1 1778.1,525.1 1780.1,539.6 1782.3,533.5 1784.3,544.7 1786.4,507.0 1788.5,522.3 1790.5,499.9 1792.4,526.6 1794.6,524.3 1796.7,493.7 1798.6,490.9 1800.7,496.0 1802.8,521.9 1804.8,521.1 1807.1,510.1 1809.1,497.2 1811.1,518.0 1813.0,514.5 1815.4,490.5 1817.5,463.4 1819.5,487.0 1821.6,488.2 1823.7,496.8 1825.7,496.8 1827.8,498.4 1829.9,504.1 1832.0,478.3 1833.9,514.5 1836.0,494.2 1838.0,496.0 1840.0,494.2 1842.1,477.2 1844.1,492.9 1846.1,500.3 1848.4,532.9 1850.5,512.5 1852.6,501.5 1854.7,485.8 1856.6,473.2 1858.7,499.9 1860.6,493.7 1862.8,494.2 1864.9,520.0 1867.1,517.6 1869.0,517.8 1871.0,475.6 1873.2,480.3 1875.2,494.8 1877.3,494.8 1879.4,479.5 1881.4,476.4 1883.4,481.9 1885.5,473.2 1887.6,515.2 1889.7,480.7" fill="none" stroke="#000" stroke-width="1.700" stroke-linejoin="round"/>
<polyline points="1136.3,518.6 1138.8,512.2 1140.8,510.6 1142.9,523.3 1144.6,504.3 1146.6,501.2 1148.7,519.9 1151.0,545.7 1152.8,533.4 1154.9,512.2 1157.2,504.7 1159.0,506.8 1161.5,510.4 1163.4,513.4 1165.3,530.7 1167.3,560.7 1169.4,536.7 1171.7,479.0 1173.7,486.6 1176.0,498.5 1177.9,500.6 1180.0,483.4 1182.0,499.0 1184.1,502.0 1186.2,491.8 1188.2,493.7 1190.5,486.4 1192.2,502.6 1194.5,545.0 1196.5,533.6 1198.8,499.0 1200.9,512.3 1202.7,516.5 1204.6,515.3 1206.9,485.9 1208.9,521.5 1211.0,520.9 1213.3,528.1 1215.4,497.1 1217.2,465.4 1219.3,475.4 1221.4,487.3 1223.6,502.5 1225.7,532.6 1227.8,515.1 1229.9,503.7 1231.9,515.5 1234.0,526.2 1235.9,516.2 1237.9,488.7 1240.0,476.5 1242.1,465.6 1244.4,489.4 1246.0,480.8 1248.3,512.7 1250.4,503.7 1252.4,470.9 1254.5,511.5 1256.6,538.5 1258.4,485.3 1260.6,459.5 1262.8,461.4 1264.8,467.5 1266.9,483.5 1269.2,482.1 1271.1,493.4 1273.1,483.6 1275.2,492.9 1277.3,493.6 1279.3,481.0 1281.6,499.0 1283.7,495.7 1285.6,449.6 1287.6,439.0 1289.7,452.5 1292.0,465.4 1294.0,486.3 1296.1,480.4 1298.2,507.2 1300.5,492.6 1302.3,495.7 1304.5,478.1 1306.6,462.6 1308.7,469.0 1310.8,489.9 1312.7,533.4 1314.7,558.1 1316.8,466.4 1318.9,478.4 1321.0,481.7 1322.8,492.0 1325.1,498.1 1327.2,465.4 1329.2,457.3 1331.3,468.3 1333.2,488.6 1335.5,425.8 1337.5,452.7 1339.6,466.2 1341.7,502.0 1343.7,519.2 1345.6,482.3 1347.7,473.8 1349.7,467.7 1352.0,489.0 1353.9,478.5 1356.0,456.0 1358.2,503.1 1360.1,436.6 1362.2,471.3 1364.2,450.9 1366.4,462.3 1368.6,460.6 1370.7,495.2 1372.9,480.0 1374.8,484.8 1376.7,401.0 1378.7,451.0 1380.9,436.6 1383.1,459.3 1384.9,441.4 1387.0,487.7 1389.3,443.4 1391.4,463.3 1393.2,488.4 1395.4,456.6 1397.6,465.9 1399.6,475.7 1401.5,478.7 1403.6,369.2 1405.6,442.5 1407.7,452.6 1409.8,450.7 1411.9,423.3 1413.7,434.1 1415.9,480.8 1418.1,422.0 1420.1,431.9 1422.2,428.8 1424.3,474.6 1426.6,471.1 1428.6,482.4 1430.7,418.9 1432.8,440.9 1434.6,447.4 1436.7,454.3 1439.0,440.8 1440.8,458.4 1442.9,439.9 1445.2,427.7 1447.1,399.1 1449.3,422.3 1451.5,460.8 1453.5,456.3 1455.7,465.3 1457.8,467.3 1459.6,478.3 1461.6,425.6 1463.8,465.3 1465.7,475.3 1467.6,403.9 1469.6,330.4 1471.9,323.7 1474.0,344.8 1475.8,403.0 1477.9,384.0 1480.1,435.8 1482.3,419.3 1484.1,350.2 1486.2,292.3 1488.5,391.3 1490.6,407.9 1492.6,491.9 1494.5,453.7 1496.5,420.4 1498.8,410.5 1501.3,422.9 1502.7,414.5 1504.9,411.7 1507.1,474.6 1509.2,519.8 1511.1,434.2 1513.2,463.9 1515.4,476.9 1517.4,391.2 1519.4,426.2 1521.5,464.8 1523.5,446.6 1525.5,514.6 1527.6,486.8 1529.9,489.6 1531.9,486.4 1533.8,444.4 1536.0,442.0 1537.9,500.8 1540.0,489.2 1542.1,475.8 1544.2,555.3 1546.4,535.6 1548.4,460.8 1550.5,471.0 1552.5,486.4 1554.7,513.6 1556.6,533.2 1558.7,525.4 1560.9,523.4 1563.0,500.7 1565.1,526.1 1567.0,538.7 1569.2,527.2 1571.3,523.1 1573.1,483.2 1575.2,482.8 1577.3,470.5 1579.5,414.5 1581.5,416.4 1583.6,491.6 1585.8,485.8 1587.6,463.9 1589.7,435.7 1591.9,465.6 1594.0,487.8 1595.9,481.8 1598.0,502.9 1600.1,508.3 1602.3,516.3 1604.4,531.4 1606.4,516.5 1608.4,519.5 1610.5,522.2 1612.5,494.7 1614.6,510.1 1616.6,520.2 1618.7,521.0 1620.8,434.7 1622.8,363.7 1624.9,400.4 1627.0,430.9 1629.0,463.8 1631.1,425.5 1633.4,464.0 1635.3,482.4 1637.3,493.3 1639.4,476.2 1641.5,461.7 1643.5,469.1 1645.6,477.2 1647.7,461.1 1649.8,487.1 1651.8,482.7 1653.9,462.8 1656.0,484.7 1658.0,513.5 1660.1,507.4 1662.2,485.6 1664.0,496.8 1666.3,492.3 1668.4,495.7 1670.3,482.0 1672.3,512.8 1674.5,525.1 1676.6,506.9 1678.7,569.5 1680.8,473.0 1682.9,489.9 1685.0,484.3 1687.0,489.7 1689.1,507.2 1691.2,498.4 1693.2,478.5 1695.4,455.0 1697.5,442.9 1699.4,499.2 1701.5,481.0 1703.6,469.4 1705.7,472.6 1707.7,496.8 1709.8,493.9 1711.9,510.5 1713.9,522.7 1716.0,495.6 1718.1,461.3 1720.2,497.9 1722.2,505.6 1724.3,456.2 1726.4,473.4 1728.4,485.0 1730.5,508.7 1732.6,495.7 1734.4,516.9 1736.5,528.1 1738.6,473.9 1740.9,454.0 1742.7,509.9 1744.8,519.5 1747.0,477.5 1749.0,472.9 1751.2,474.8 1753.1,506.5 1755.1,507.0 1757.4,485.1 1759.4,483.5 1761.5,507.7 1763.5,527.8 1765.6,564.9 1767.8,436.5 1769.6,492.6 1771.9,489.7 1774.0,470.5 1776.2,503.2 1778.1,524.6 1780.1,538.8 1782.3,534.0 1784.3,544.2 1786.4,505.4 1788.5,523.7 1790.5,501.2 1792.4,527.9 1794.6,525.5 1796.7,492.7 1798.6,492.3 1800.7,494.7 1802.8,520.8 1804.8,522.0 1807.1,510.8 1809.1,498.3 1811.1,517.5 1813.0,514.2 1815.4,489.4 1817.5,462.1 1819.5,487.4 1821.6,487.2 1823.7,495.5 1825.7,497.5 1827.8,496.8 1829.9,504.7 1832.0,476.7 1833.9,514.9 1836.0,493.1 1838.0,497.5 1840.0,493.7 1842.1,476.0 1844.1,491.1 1846.1,498.9 1848.4,532.6 1850.5,513.7 1852.6,500.1 1854.7,486.7 1856.6,471.9 1858.7,498.2 1860.6,492.4 1862.8,493.0 1864.9,520.9 1867.1,518.5 1869.0,518.1 1871.0,475.1 1873.2,480.1 1875.2,494.2 1877.3,494.9 1879.4,478.1 1881.4,474.8 1883.4,483.3 1885.5,473.7 1887.6,516.0 1889.7,479.6" fill="none" stroke="#f00" stroke-opacity="0.8" stroke-width="1.700" stroke-dasharray="5.400 2.350" stroke-linejoin="round"/>
<path d="M1732.8 259.8V588.6" stroke="#00f" stroke-width="1.5" stroke-dasharray="1.5 2.4" fill="none"/>
<path d="M1134.2 588.6v3.4M1258.4 588.6v3.4M1384.7 588.6v3.4M1511.0 588.6v3.4M1639.4 588.6v3.4M1765.7 588.6v3.4M1892.0 588.6v3.4M1099.6 562.0h-3.4M1099.6 522.7h-3.4M1099.6 483.4h-3.4M1099.6 444.2h-3.4M1099.6 404.9h-3.4M1099.6 365.7h-3.4M1099.6 326.4h-3.4M1099.6 287.2h-3.4" stroke="#222" stroke-width="0.8" fill="none"/>
<rect x="1099.6" y="259.8" width="828.0" height="328.8" fill="none" stroke="#222" stroke-width="0.9"/>
<g font-family="Liberation Sans,NanumGothic,sans-serif" font-size="10.700" fill="#2b2b2b">
<text x="1134.2" y="604" text-anchor="middle" textLength="35" lengthAdjust="spacingAndGlyphs">2024-01</text>
<text x="1258.4" y="604" text-anchor="middle" textLength="35" lengthAdjust="spacingAndGlyphs">2024-03</text>
<text x="1384.7" y="604" text-anchor="middle" textLength="35" lengthAdjust="spacingAndGlyphs">2024-05</text>
<text x="1511.0" y="604" text-anchor="middle" textLength="35" lengthAdjust="spacingAndGlyphs">2024-07</text>
<text x="1639.4" y="604" text-anchor="middle" textLength="35" lengthAdjust="spacingAndGlyphs">2024-09</text>
<text x="1765.7" y="604" text-anchor="middle" textLength="35" lengthAdjust="spacingAndGlyphs">2024-11</text>
<text x="1892.0" y="604" text-anchor="middle" textLength="35" lengthAdjust="spacingAndGlyphs">2025-01</text>
<text x="1092.3" y="566.0" text-anchor="end" textLength="10.6" lengthAdjust="spacingAndGlyphs">10</text>
<text x="1092.3" y="526.7" text-anchor="end" textLength="10.6" lengthAdjust="spacingAndGlyphs">20</text>
<text x="1092.3" y="487.4" text-anchor="end" textLength="10.6" lengthAdjust="spacingAndGlyphs">30</text>
<text x="1092.3" y="448.2" text-anchor="end" textLength="10.6" lengthAdjust="spacingAndGlyphs">40</text>
<text x="1092.3" y="408.9" text-anchor="end" textLength="10.6" lengthAdjust="spacingAndGlyphs">50</text>
<text x="1092.3" y="369.7" text-anchor="end" textLength="10.6" lengthAdjust="spacingAndGlyphs">60</text>
<text x="1092.3" y="330.4" text-anchor="end" textLength="10.6" lengthAdjust="spacingAndGlyphs">70</text>
<text x="1092.3" y="291.2" text-anchor="end" textLength="10.6" lengthAdjust="spacingAndGlyphs">80</text>
<text x="1513.5" y="617.6" text-anchor="middle" textLength="21" lengthAdjust="spacingAndGlyphs">Date</text>
<text transform="translate(1074.3 424) rotate(-90)" text-anchor="middle" textLength="41" lengthAdjust="spacingAndGlyphs">O3 (ppb)</text>
</g>
<text font-family="Liberation Sans,NanumGothic,sans-serif" font-size="14.500" fill="#1f1f1f" x="1513.200" y="253.900" text-anchor="middle" textLength="353.7" lengthAdjust="spacingAndGlyphs">O3 Concentration Trend: Actual vs LSTM (Daily Average)</text>
<rect x="1805.5" y="264" width="116.8" height="49.4" rx="2" fill="#fff" fill-opacity="0.8" stroke="#d4d4d4" stroke-width="0.9"/>
<path d="M1809 273.4h21" stroke="#000" stroke-width="1.5"/>
<path d="M1809 288.4h21" stroke="#f00" stroke-opacity="0.8" stroke-width="1.5" stroke-dasharray="5.4 2.35"/>
<path d="M1809 303.4h21" stroke="#00f" stroke-width="1.5" stroke-dasharray="1.5 2.4"/>
<g font-family="Liberation Sans,NanumGothic,sans-serif" font-size="10.600" fill="#1f1f1f">
<text x="1837.4" y="277.200" textLength="81.3" lengthAdjust="spacingAndGlyphs">Measured (Actual)</text>
<text x="1837.4" y="292.200" textLength="69.2" lengthAdjust="spacingAndGlyphs">LSTM Predicted</text>
<text x="1837.4" y="307.200" textLength="64.6" lengthAdjust="spacingAndGlyphs">Train/Test Split</text>
</g>
</svg>
<svg style="left:0;top:0" width="2084" height="1384" viewBox="0 0 2084 1384">
<rect x="1964.9" y="161.8" width="100.1" height="50.1" fill="#fff"/>
<path d="M1975.5 164V208.3M1982.0 164V208.3M1988.5 164V208.3M1995.1 164V208.3M2001.6 164V208.3M2008.1 164V208.3M1969 170.3H2014.6M1969 176.7H2014.6M1969 183.0H2014.6M1969 189.3H2014.6M1969 195.6H2014.6M1969 202.0H2014.6" stroke="#e9e9e9" stroke-width="0.3" fill="none"/>
<rect x="1969" y="164" width="45.6" height="44.3" fill="none" stroke="#9a9a9a" stroke-width="0.35"/>
<path d="M1969 208.3L2014.6 164" stroke="#a8a8a8" stroke-width="0.4"/>
<text x="1991.8" y="163.6" font-size="1.5" font-family="Liberation Sans,sans-serif" fill="#777" text-anchor="middle">LSTM Train - Hourly Scatter (R2=0.905)</text>
<path d="M2025.7 164V208.3M2032.2 164V208.3M2038.6 164V208.3M2045.0 164V208.3M2051.4 164V208.3M2057.9 164V208.3M2019.3 170.3H2064.3M2019.3 176.7H2064.3M2019.3 183.0H2064.3M2019.3 189.3H2064.3M2019.3 195.6H2064.3M2019.3 202.0H2064.3" stroke="#e9e9e9" stroke-width="0.3" fill="none"/>
<rect x="2019.3" y="164" width="45.0" height="44.3" fill="none" stroke="#9a9a9a" stroke-width="0.35"/>
<path d="M2019.3 208.3L2064.3 164" stroke="#a8a8a8" stroke-width="0.4"/>
<text x="2041.8" y="163.6" font-size="1.5" font-family="Liberation Sans,sans-serif" fill="#777" text-anchor="middle">LSTM Train - Daily Scatter (R2=0.986)</text>
<path d="M1971.5 205.8L1986 192.5" stroke="#1b1b8c" stroke-width="1.1" stroke-linecap="round"/><path d="M1986 192.500L1991 188M1993 186.500l4-3.800" stroke="#3a3ae0" stroke-width="0.7" stroke-linecap="round"/>
<path d="M2022 205l1.500-1.400M2031 196.700l2.500-2.300" stroke="#e03a3a" stroke-width="0.7" stroke-linecap="round"/><path d="M2023.500 203.600L2031 196.700" stroke="#2a1fd0" stroke-width="1.100" stroke-linecap="round"/>
<rect x="1964.9" y="218" width="100.1" height="54.9" fill="#fff"/>
<path d="M1979.4 222.3V265.4M1993.2 222.3V265.4M2007.1 222.3V265.4M2021.0 222.3V265.4M2034.8 222.3V265.4M2048.7 222.3V265.4M2062.5 222.3V265.4M1975.3 227.3H2063.4M1975.3 235.6H2063.4M1975.3 243.9H2063.4M1975.3 252.2H2063.4M1975.3 260.5H2063.4" stroke="#e9e9e9" stroke-width="0.3" fill="none"/>
<rect x="1975.3" y="222.3" width="88.1" height="43.1" fill="none" stroke="#9a9a9a" stroke-width="0.35"/>
<polyline fill="none" stroke="#5aa2d8" stroke-width="0.7" points="1979.400,224.100 1980.300,230 1981.200,236 1982.100,247 1983.900,251.500 1986.600,254.500 1990.200,256.800 1993.800,258 1997.400,259.300 2001,260.700 2003,260.400 2010,260.300 2015,260.600 2020,261.300 2030,261.500 2040,261.600 2050,261.600 2059.800,261.500"/>
<polyline fill="none" stroke="#f59a4a" stroke-width="0.7" points="1979.400,245 1981.200,250 1983,253.300 1986,256 1990,258.200 1993.400,260.600 1996,260.400 1998.400,258.500 2001,261.300 2004,262.500 2013,262.500 2016,261.300 2019,262.300 2025,262.300 2030,263.200 2035,262.300 2040,262.600 2045,263.200 2048,262.200 2051,263.400 2054,262.700 2057,263.500 2059.800,263.400"/>
<text x="2019.4" y="221.400" font-size="2.600" font-family="Liberation Sans,sans-serif" fill="#777" text-anchor="middle">Model Loss (MSE)</text><text x="2019.400" y="271.200" font-size="1.900" font-family="Liberation Sans,sans-serif" fill="#777" text-anchor="middle">Epochs</text>
<rect x="2046.600" y="223.400" width="15.600" height="7" fill="#fff" stroke="#ddd" stroke-width="0.300"/><path d="M2047.400 225.300h2.600" stroke="#5aa2d8" stroke-width="0.500"/><path d="M2047.400 228.300h2.600" stroke="#f59a4a" stroke-width="0.500"/><text x="2056.500" y="226" font-size="1.900" font-family="Liberation Sans,sans-serif" fill="#777" text-anchor="middle">Train Loss</text><text x="2055.600" y="229" font-size="1.900" font-family="Liberation Sans,sans-serif" fill="#777" text-anchor="middle">Val Loss</text>
<text x="1979.4" y="268.300" font-size="1.800" font-family="Liberation Sans,sans-serif" fill="#777" text-anchor="middle">0</text>
<text x="1993.2" y="268.300" font-size="1.800" font-family="Liberation Sans,sans-serif" fill="#777" text-anchor="middle">5</text>
<text x="2007.1" y="268.300" font-size="1.800" font-family="Liberation Sans,sans-serif" fill="#777" text-anchor="middle">10</text>
<text x="2021.0" y="268.300" font-size="1.800" font-family="Liberation Sans,sans-serif" fill="#777" text-anchor="middle">15</text>
<text x="2034.8" y="268.300" font-size="1.800" font-family="Liberation Sans,sans-serif" fill="#777" text-anchor="middle">20</text>
<text x="2048.7" y="268.300" font-size="1.800" font-family="Liberation Sans,sans-serif" fill="#777" text-anchor="middle">25</text>
<text x="2062.5" y="268.300" font-size="1.800" font-family="Liberation Sans,sans-serif" fill="#777" text-anchor="middle">30</text>
<rect x="1965" y="279" width="100" height="43.700" rx="3" fill="#1a72bb"/>
<rect x="1968" y="282" width="94.300" height="37.800" fill="#fff"/>
<path d="M1976.0 284.3V316.1M1989.4 284.3V316.1M2003.1 284.3V316.1M2016.7 284.3V316.1M2030.5 284.3V316.1M2044.1 284.3V316.1M2057.8 284.3V316.1M1972.3 313.5H2061.6M1972.3 309.7H2061.6M1972.3 305.9H2061.6M1972.3 302.2H2061.6M1972.3 298.4H2061.6M1972.3 294.6H2061.6M1972.3 290.8H2061.6M1972.3 287.0H2061.6" stroke="#e9e9e9" stroke-width="0.3" fill="none"/>
<rect x="1972.3" y="284.3" width="89.3" height="31.8" fill="none" stroke="#9a9a9a" stroke-width="0.35"/>
<polyline points="1976.3,309.5 1976.5,308.7 1976.8,308.8 1977.0,309.4 1977.2,307.8 1977.4,307.6 1977.6,309.0 1977.9,311.6 1978.1,310.6 1978.3,309.0 1978.5,307.5 1978.7,307.8 1979.0,308.6 1979.2,308.7 1979.4,310.3 1979.6,313.6 1979.8,310.9 1980.1,305.0 1980.3,306.4 1980.6,307.3 1980.8,307.1 1981.0,305.9 1981.2,307.3 1981.4,307.7 1981.6,306.7 1981.9,306.8 1982.1,305.7 1982.3,307.3 1982.5,311.3 1982.8,310.7 1983.0,307.2 1983.2,308.9 1983.4,309.1 1983.6,308.6 1983.9,306.0 1984.1,309.4 1984.3,309.0 1984.6,309.8 1984.8,307.0 1985.0,303.9 1985.2,304.6 1985.4,305.9 1985.7,307.3 1985.9,310.9 1986.1,308.5 1986.4,307.3 1986.6,309.1 1986.8,309.6 1987.0,308.9 1987.2,306.2 1987.5,305.2 1987.7,303.9 1987.9,306.2 1988.1,305.4 1988.3,308.5 1988.6,307.3 1988.8,304.3 1989.0,308.5 1989.2,311.3 1989.4,305.7 1989.7,303.9 1989.9,303.6 1990.1,304.1 1990.4,305.6 1990.6,305.6 1990.8,307.0 1991.0,305.7 1991.3,306.3 1991.5,306.4 1991.7,305.1 1991.9,307.7 1992.2,307.3 1992.4,302.5 1992.6,301.7 1992.8,302.4 1993.1,304.2 1993.3,306.3 1993.5,305.5 1993.7,308.0 1994.0,306.9 1994.2,307.3 1994.4,305.4 1994.6,303.6 1994.9,304.3 1995.1,306.4 1995.3,310.3 1995.5,312.6 1995.7,304.3 1996.0,305.1 1996.2,305.6 1996.4,307.0 1996.6,307.0 1996.9,304.0 1997.1,303.0 1997.3,304.3 1997.5,306.1 1997.7,300.5 1998.0,302.8 1998.2,304.0 1998.4,307.6 1998.6,309.0 1998.8,305.6 1999.1,304.7 1999.3,304.7 1999.5,306.0 1999.7,305.3 2000.0,303.7 2000.2,308.6 2000.4,301.0 2000.6,304.4 2000.9,302.9 2001.1,303.4 2001.3,304.0 2001.5,306.4 2001.8,305.8 2002.0,305.6 2002.2,297.3 2002.4,302.3 2002.7,301.4 2002.9,303.4 2003.1,301.6 2003.3,305.8 2003.6,301.8 2003.8,304.0 2004.0,306.6 2004.2,302.9 2004.4,304.3 2004.7,305.4 2004.9,305.4 2005.1,293.9 2005.3,302.0 2005.5,302.6 2005.8,302.7 2006.0,299.8 2006.2,301.3 2006.4,305.4 2006.7,299.6 2006.9,301.1 2007.1,300.8 2007.3,305.0 2007.6,304.5 2007.8,305.4 2008.0,299.6 2008.2,302.0 2008.4,302.7 2008.7,302.8 2008.9,301.4 2009.1,303.5 2009.3,301.2 2009.6,300.4 2009.8,297.4 2010.0,299.8 2010.3,303.4 2010.5,303.6 2010.7,303.7 2010.9,304.1 2011.1,305.2 2011.4,300.2 2011.6,303.8 2011.8,305.3 2012.0,298.0 2012.2,290.2 2012.5,289.2 2012.7,292.0 2012.9,297.9 2013.1,296.0 2013.3,301.0 2013.6,299.4 2013.8,292.7 2014.0,285.8 2014.3,296.8 2014.5,298.3 2014.7,306.2 2014.9,302.9 2015.1,299.6 2015.4,298.7 2015.6,299.8 2015.8,299.2 2016.0,298.8 2016.3,304.5 2016.5,309.0 2016.7,301.2 2016.9,303.6 2017.2,305.3 2017.4,295.9 2017.6,300.2 2017.8,304.0 2018.0,302.2 2018.2,308.5 2018.5,306.2 2018.7,306.5 2018.9,306.0 2019.1,301.7 2019.4,301.4 2019.6,307.6 2019.8,306.2 2020.0,305.3 2020.3,312.4 2020.5,310.4 2020.7,303.9 2020.9,304.4 2021.2,305.8 2021.4,309.1 2021.6,310.9 2021.8,310.0 2022.1,309.2 2022.3,307.1 2022.5,310.2 2022.7,311.3 2023.0,310.2 2023.2,309.9 2023.4,306.0 2023.6,306.0 2023.8,304.6 2024.1,299.0 2024.3,299.3 2024.5,306.2 2024.7,306.2 2024.9,303.8 2025.2,301.3 2025.4,304.1 2025.6,306.3 2025.8,305.8 2026.1,307.6 2026.3,308.2 2026.5,309.2 2026.8,310.4 2027.0,309.4 2027.2,308.9 2027.4,309.2 2027.6,306.9 2027.8,308.6 2028.1,309.2 2028.3,309.3 2028.5,301.2 2028.7,293.2 2029.0,297.6 2029.2,300.8 2029.4,303.3 2029.6,300.3 2029.9,303.8 2030.1,305.7 2030.3,306.4 2030.5,305.0 2030.8,303.6 2031.0,304.6 2031.2,305.6 2031.4,303.7 2031.6,306.2 2031.9,305.9 2032.1,303.6 2032.3,306.0 2032.5,308.3 2032.8,308.5 2033.0,306.4 2033.2,306.9 2033.4,306.5 2033.7,306.7 2033.9,305.3 2034.1,308.7 2034.3,309.4 2034.5,307.8 2034.8,314.5 2035.0,305.1 2035.2,306.4 2035.4,305.4 2035.7,306.2 2035.9,308.2 2036.1,307.3 2036.3,305.2 2036.6,303.2 2036.8,302.2 2037.0,307.1 2037.2,305.6 2037.5,304.4 2037.7,304.7 2037.9,307.3 2038.1,306.7 2038.3,308.2 2038.6,309.5 2038.8,306.6 2039.0,303.5 2039.2,307.0 2039.5,307.8 2039.7,303.5 2039.9,304.8 2040.1,305.8 2040.4,308.0 2040.6,306.9 2040.8,309.2 2041.0,310.2 2041.2,305.1 2041.5,303.2 2041.7,308.5 2041.9,309.5 2042.1,305.2 2042.4,304.8 2042.6,305.0 2042.8,308.2 2043.0,308.3 2043.3,306.0 2043.5,305.8 2043.7,308.2 2043.9,310.3 2044.1,314.0 2044.4,301.3 2044.6,306.7 2044.8,306.6 2045.0,304.8 2045.3,307.9 2045.5,310.0 2045.7,311.4 2045.9,310.8 2046.2,311.9 2046.4,308.2 2046.6,309.7 2046.8,307.5 2047.0,310.1 2047.3,309.9 2047.5,306.9 2047.7,306.7 2047.9,307.2 2048.1,309.7 2048.4,309.6 2048.6,308.5 2048.8,307.3 2049.1,309.3 2049.3,308.9 2049.5,306.6 2049.7,304.0 2050.0,306.3 2050.2,306.4 2050.4,307.2 2050.6,307.2 2050.8,307.4 2051.1,307.9 2051.3,305.4 2051.5,308.9 2051.7,307.0 2051.9,307.2 2052.2,307.0 2052.4,305.3 2052.6,306.9 2052.8,307.6 2053.1,310.7 2053.3,308.7 2053.5,307.7 2053.8,306.2 2054.0,305.0 2054.2,307.5 2054.4,306.9 2054.6,307.0 2054.8,309.5 2055.1,309.2 2055.3,309.3 2055.5,305.2 2055.7,305.6 2056.0,307.0 2056.2,307.0 2056.4,305.6 2056.6,305.3 2056.8,305.8 2057.1,305.0 2057.3,309.0 2057.5,305.7" fill="none" stroke="#9c3d3d" stroke-width="0.45"/>
<path d="M2040.6 284.3V316.1" stroke="#8a8aff" stroke-width="0.3"/>
<text x="2016.9" y="284.700" font-size="1.600" font-family="Liberation Sans,sans-serif" fill="#777" text-anchor="middle">O3 Concentration Trend: Actual vs LSTM (Daily Average)</text>
<rect x="1965" y="328.900" width="100" height="36.900" fill="#fff"/>
<rect x="1968" y="331.200" width="96.300" height="31.600" fill="none" stroke="#9a9a9a" stroke-width="0.35"/>
<polyline points="1972.3,353.6 1973.2,341.1 1974.5,336.8 1976.5,333.0 1978.3,337.3 1979.9,341.1 1981.0,355.7 1982.4,348.7 1984.3,360.1 1985.9,350.9 1987.3,335.7 1988.6,334.1 1990.5,336.8 1991.8,349.8 1993.1,351.4 1994.6,349.8 1995.6,361.2 1996.7,346.5 1998.4,355.2 1999.4,340.0 2000.5,333.3 2002.1,344.4 2003.6,353.0 2004.9,359.3 2006.2,353.0 2007.3,340.0 2009.2,338.9 2010.8,337.9 2012.2,344.4 2013.3,336.8 2015.3,337.9 2017.0,339.5 2018.9,337.6 2021.7,335.9 2023.5,338.1 2026.5,336.8 2029.2,337.0 2030.9,338.1 2033.0,335.1 2033.9,349.8 2035.0,358.5 2036.3,350.9 2037.4,340.6 2039.0,346.0 2040.6,342.0 2041.7,350.9 2043.0,359.0 2044.4,359.8 2046.0,350.9 2047.1,345.4 2048.2,338.9 2049.5,334.9 2051.2,342.2 2053.1,352.8 2055.2,350.6 2056.9,351.5 2058.5,342.2 2059.6,339.8" fill="none" stroke="#7a4a4a" stroke-width="0.5"/>
<polyline points="1972.7,354.4 1973.5,342.0 1974.8,337.6 1976.8,333.8 1978.6,338.2 1980.3,342.0 1981.3,356.6 1982.7,349.6 1984.6,360.9 1986.2,351.7 1987.6,336.6 1988.9,334.9 1990.9,337.6 1992.2,350.6 1993.5,352.3 1994.9,350.6 1996.0,362.0 1997.1,347.4 1998.7,356.1 1999.8,340.9 2000.8,334.2 2002.5,345.2 2003.9,353.9 2005.2,360.2 2006.5,353.9 2007.7,340.9 2009.5,339.8 2011.1,338.7 2012.5,345.2 2013.6,337.6 2015.6,338.7 2017.3,340.4 2019.3,338.5 2022.0,336.8 2023.8,338.9 2026.9,337.6 2029.6,337.9 2031.2,338.9 2033.4,336.0 2034.2,350.6 2035.3,359.3 2036.6,351.7 2037.7,341.4 2039.3,346.9 2040.9,342.8 2042.0,351.7 2043.3,359.9 2044.7,360.6 2046.4,351.7 2047.4,346.3 2048.5,339.8 2049.8,335.8 2051.6,343.1 2053.4,353.7 2055.6,351.5 2057.2,352.4 2058.8,343.1 2059.9,340.7" fill="none" stroke="#f08a8a" stroke-width="0.4"/>
<text x="2016" y="331" font-size="1.500" font-family="Liberation Sans,sans-serif" fill="#777" text-anchor="middle">Test Set Detail: Hourly O3 Comparison (1 Week Sample)</text>
<rect x="1965" y="372" width="100" height="46.900" fill="#fff"/>
<path d="M1974.1 375.200V414.800M1980.2 375.200V414.800M1986.3 375.200V414.800M1992.4 375.200V414.800M1998.5 375.200V414.800M2004.6 375.200V414.800M1968 408.9H2008.9M1968 403.0H2008.9M1968 397.1H2008.9M1968 391.2H2008.9M1968 385.2H2008.9M1968 379.3H2008.9" stroke="#e9e9e9" stroke-width="0.3" fill="none"/>
<rect x="1968" y="375.200" width="40.9" height="39.600" fill="none" stroke="#9a9a9a" stroke-width="0.35"/>
<path d="M1968 414.800L2008.9 375.200" stroke="#8a8a8a" stroke-width="0.350"/>
<text x="1988.5" y="374.600" font-size="1.500" font-family="Liberation Sans,sans-serif" fill="#777" text-anchor="middle">Hourly Test Scatter (R2=0.808)</text>
<path d="M2029.5 375.200V414.800M2035.6 375.200V414.800M2041.6 375.200V414.800M2047.6 375.200V414.800M2053.6 375.200V414.800M2059.7 375.200V414.800M2023.5 408.9H2063.9M2023.5 403.0H2063.9M2023.5 397.1H2063.9M2023.5 391.2H2063.9M2023.5 385.2H2063.9M2023.5 379.3H2063.9" stroke="#e9e9e9" stroke-width="0.3" fill="none"/>
<rect x="2023.5" y="375.200" width="40.4" height="39.600" fill="none" stroke="#9a9a9a" stroke-width="0.35"/>
<path d="M2023.5 414.800L2063.9 375.200" stroke="#8a8a8a" stroke-width="0.350"/>
<text x="2043.7" y="374.600" font-size="1.500" font-family="Liberation Sans,sans-serif" fill="#777" text-anchor="middle">Daily Test Scatter (R2=0.976)</text>
<path d="M1969 413.700L1982.500 401" stroke="#9a9a9a" stroke-opacity="0.350" stroke-width="4" stroke-linecap="round"/><path d="M1969 413.700L1981 402.500" stroke="#6a6a6a" stroke-opacity="0.500" stroke-width="1.800" stroke-linecap="round"/><path d="M1968.500 413.900L1983.800 400.200" stroke="#e8443a" stroke-width="0.600"/>
<path d="M2026 412.200L2036.500 402.200" stroke="#e8443a" stroke-width="0.600"/><path d="M2027.500 410.900L2034.500 404.200" stroke="#2a22dd" stroke-width="1.300" stroke-linecap="round"/>
</svg>
<svg style="left:0;top:0;pointer-events:none" width="2084" height="1384" viewBox="0 0 2084 1384">
<rect x="0" y="0" width="1.100" height="1384" fill="#b2b2b0"/>
<rect x="2082.900" y="0" width="1.100" height="1384" fill="#bebebe"/>
<rect x="0" y="1382.6" width="2084" height="1.4" fill="#b9b9b9"/>
<rect x="0" y="1" width="2084" height="1" fill="#fdfdfd"/>
<rect x="0" y="0" width="2084" height="1" fill="#6f6f6f"/>
<path d="M0 0H9A8 8 0 0 0 1 9V0z" fill="#8f8f8f"/>
<path d="M2084 0H2075A8 8 0 0 1 2083 9V0z" fill="#6f6f6f"/>
<path d="M0 1384V1374.600H1A8 8 0 0 0 9 1382.600V1384z" fill="#b9b9b9"/>
<path d="M2084 1384V1374.600H2083A8 8 0 0 1 2075 1382.600V1384z" fill="#c8c8c8"/>
</svg>
</div>
</body></html>
